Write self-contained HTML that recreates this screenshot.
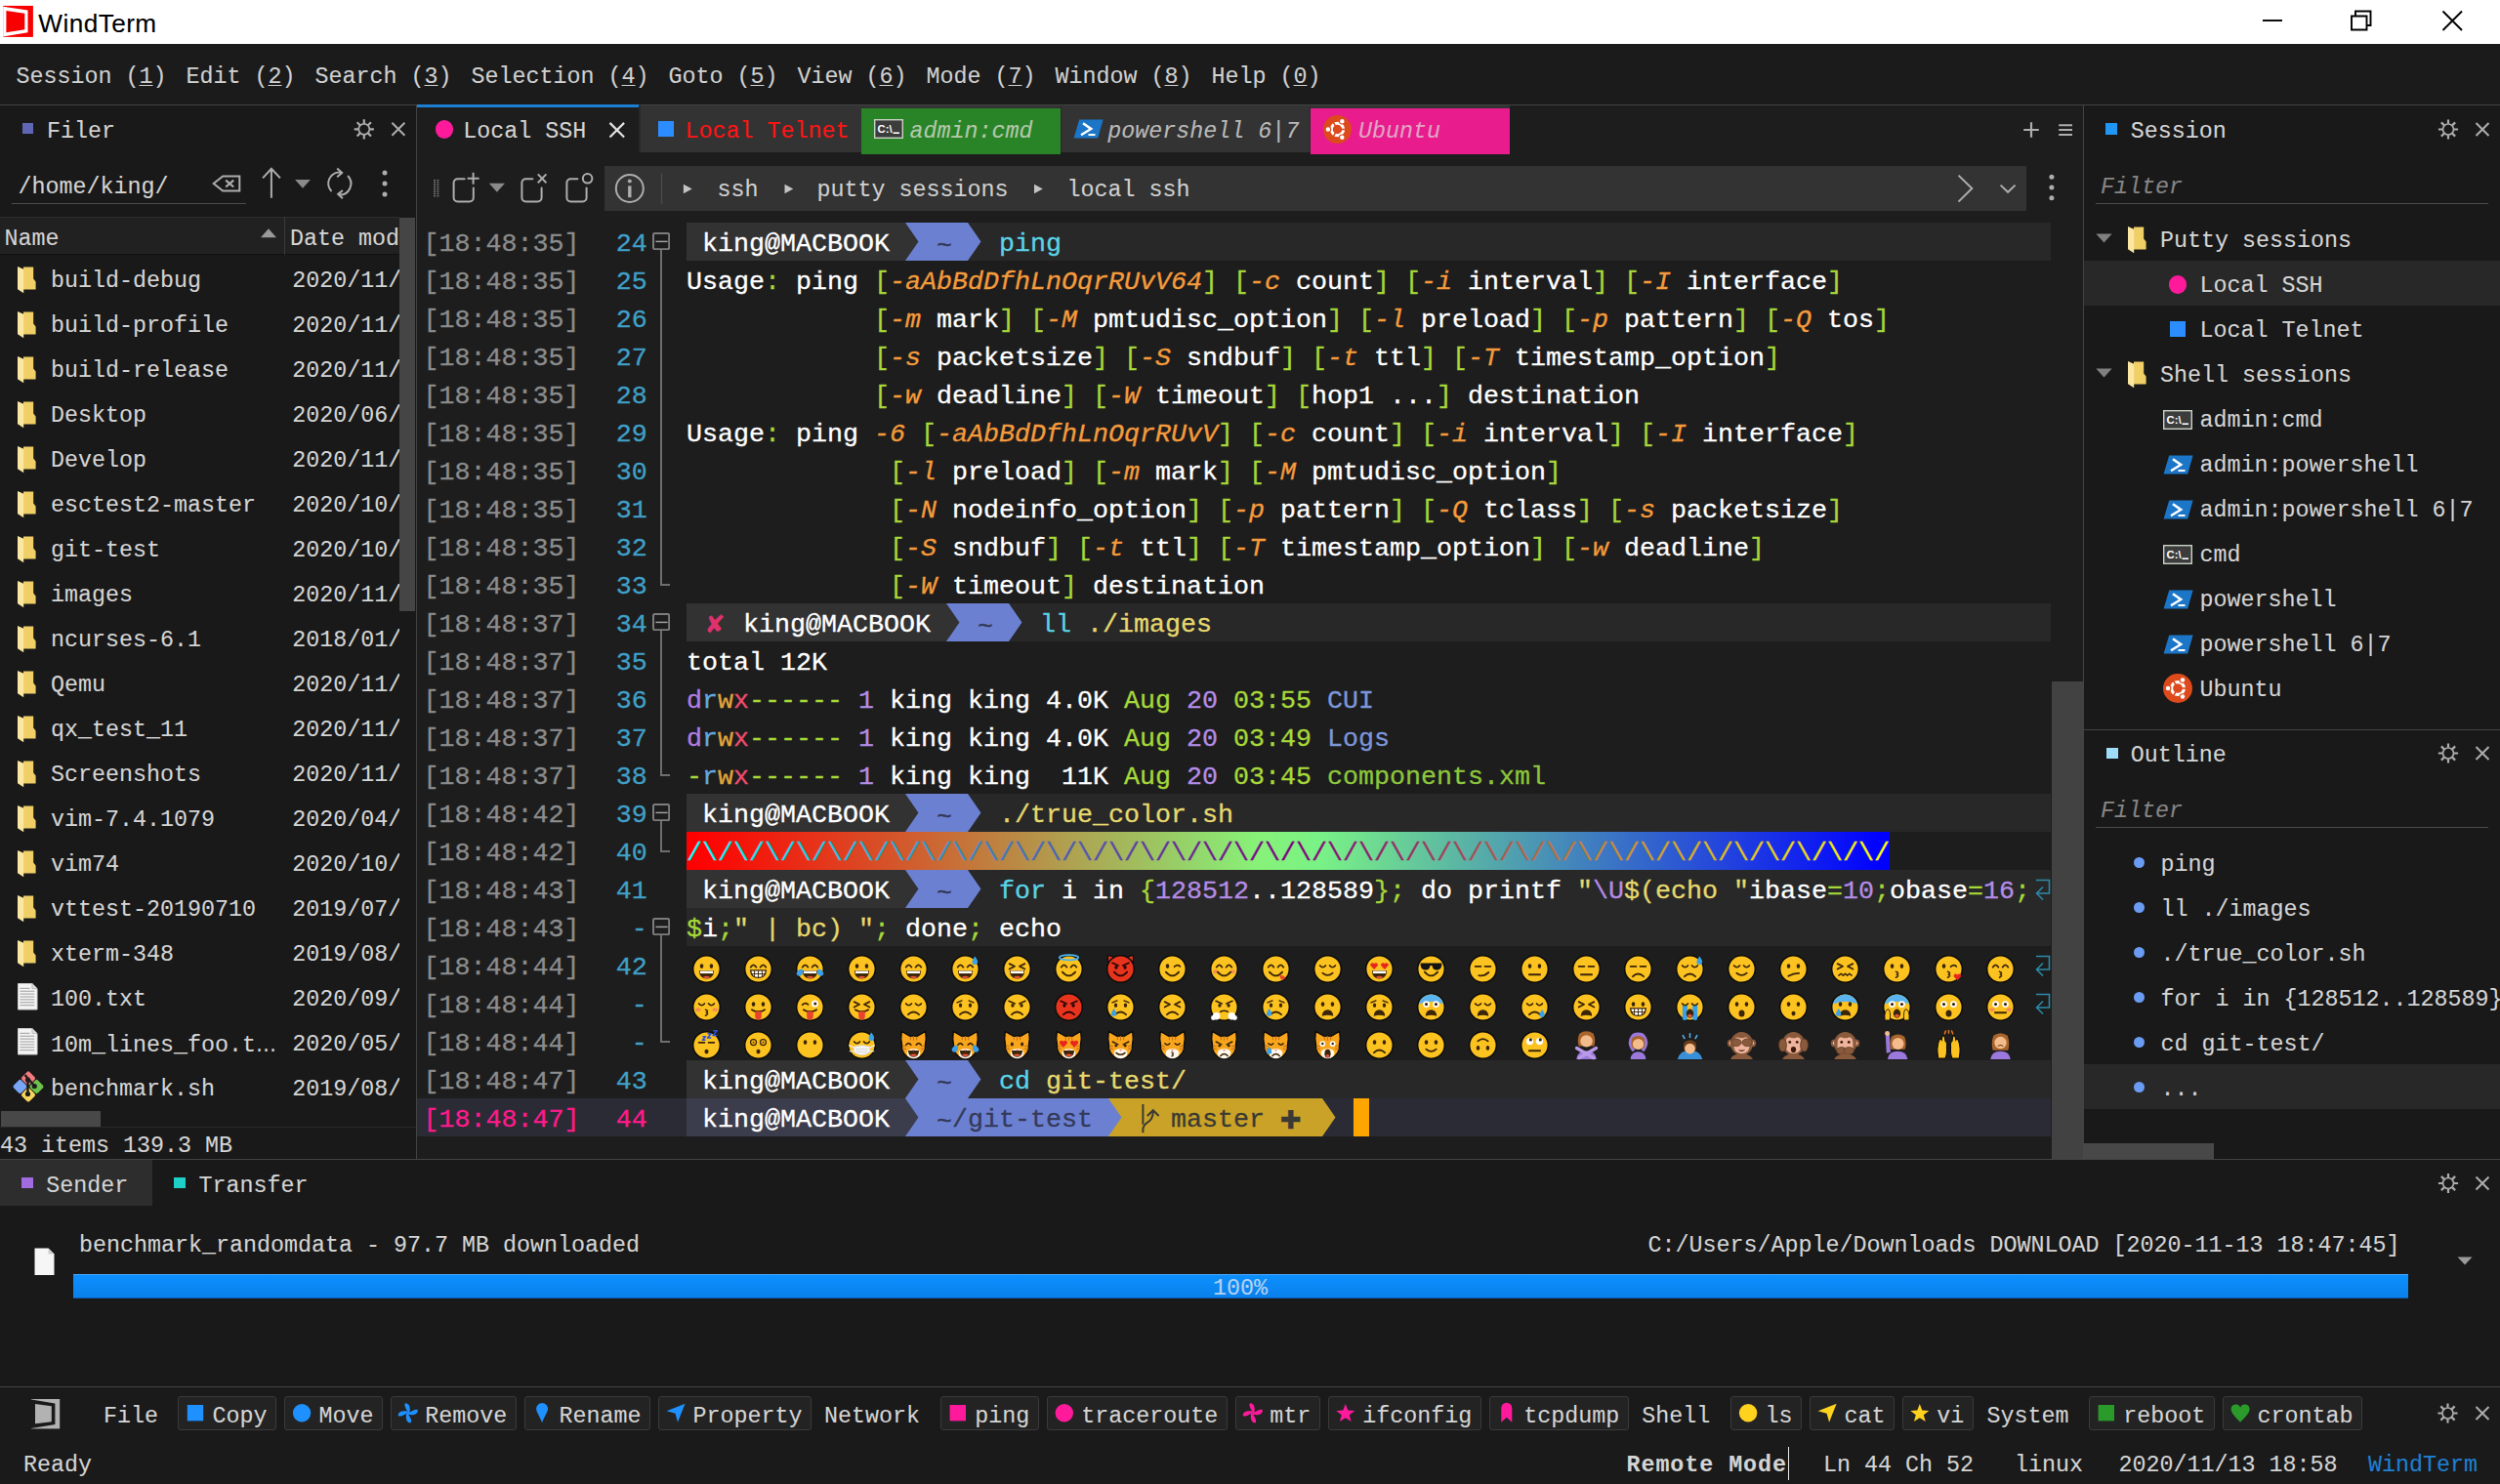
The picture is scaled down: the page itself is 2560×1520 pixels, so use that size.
<!DOCTYPE html>
<html><head><meta charset="utf-8"><title>WindTerm</title>
<style>
html,body{margin:0;padding:0;}
body{width:2560px;height:1520px;overflow:hidden;background:#1b1b1b;position:relative;font-family:"Liberation Mono","DejaVu Sans Mono",monospace;font-size:23.333px;color:#d4d4d4;-webkit-text-stroke:0.1px;}
div{box-sizing:border-box;}
.t{position:absolute;white-space:pre;top:0;height:39px;line-height:44px;font-size:26.667px;-webkit-text-stroke:0.3px;}
.sy{font-family:"DejaVu Sans","Liberation Sans",sans-serif;}
i{font-style:italic;}
u{text-decoration:underline;text-underline-offset:1.5px;text-decoration-thickness:1.2px;}.em{position:absolute;overflow:visible;}
</style></head><body>
<div style="position:absolute;left:0px;top:0px;width:2560px;height:45px;background:#ffffff;"></div><svg style="position:absolute;left:3px;top:5px;" width="32" height="34" viewBox="0 0 32 34"><rect x="0.2" y="0.9" width="30.7" height="32" fill="#f80000"/><path d="M0.2 1.7L25.5 5.6V28.3L0.2 32.4Z" fill="#fff"/><path d="M3.4 5.9L22.3 8.8V25.2L3.4 28.3Z" fill="#f80000"/></svg><div style="position:absolute;left:39.3px;top:5.6px;height:36px;line-height:36px;letter-spacing:.42px;font-family:'Liberation Sans',sans-serif;font-size:26.2px;color:#000;">WindTerm</div><svg style="position:absolute;left:2310px;top:0px;" width="240" height="45" viewBox="0 0 240 45"><g stroke="#000" stroke-width="1.9" fill="none"><path d="M7 21H27"/><path d="M98 16.5H113.5V30.5H98Z"/><path d="M102 16.5V11.5H117.5V26H113.5"/><path d="M191.5 11.5L211 31M211 11.5L191.5 31"/></g></svg><div style="position:absolute;left:0px;top:45px;width:2560px;height:62px;background:#1b1b1b;"></div><div style="position:absolute;left:0px;top:107px;width:2560px;height:1px;background:#434343;"></div><div style="position:absolute;left:16.5px;top:59.4px;height:40px;line-height:40px;font-size:23.333px;color:#d0d0d0;white-space:pre;">Session (<u>1</u>)</div><div style="position:absolute;left:190.5px;top:59.4px;height:40px;line-height:40px;font-size:23.333px;color:#d0d0d0;white-space:pre;">Edit (<u>2</u>)</div><div style="position:absolute;left:322.5px;top:59.4px;height:40px;line-height:40px;font-size:23.333px;color:#d0d0d0;white-space:pre;">Search (<u>3</u>)</div><div style="position:absolute;left:482.5px;top:59.4px;height:40px;line-height:40px;font-size:23.333px;color:#d0d0d0;white-space:pre;">Selection (<u>4</u>)</div><div style="position:absolute;left:684.5px;top:59.4px;height:40px;line-height:40px;font-size:23.333px;color:#d0d0d0;white-space:pre;">Goto (<u>5</u>)</div><div style="position:absolute;left:816.5px;top:59.4px;height:40px;line-height:40px;font-size:23.333px;color:#d0d0d0;white-space:pre;">View (<u>6</u>)</div><div style="position:absolute;left:948.5px;top:59.4px;height:40px;line-height:40px;font-size:23.333px;color:#d0d0d0;white-space:pre;">Mode (<u>7</u>)</div><div style="position:absolute;left:1080.5px;top:59.4px;height:40px;line-height:40px;font-size:23.333px;color:#d0d0d0;white-space:pre;">Window (<u>8</u>)</div><div style="position:absolute;left:1240.5px;top:59.4px;height:40px;line-height:40px;font-size:23.333px;color:#d0d0d0;white-space:pre;">Help (<u>0</u>)</div><div style="position:absolute;left:0px;top:108px;width:426px;height:1079px;background:#191919;"></div><div style="position:absolute;left:426px;top:108px;width:1px;height:1079px;background:#434343;"></div><div style="position:absolute;left:427px;top:108px;width:1706px;height:1079px;background:#1d1d1d;"></div><div style="position:absolute;left:2133px;top:108px;width:1px;height:1079px;background:#434343;"></div><div style="position:absolute;left:2134px;top:108px;width:426px;height:1079px;background:#191919;"></div><div style="position:absolute;left:0px;top:1187px;width:2560px;height:1px;background:#434343;"></div><div style="position:absolute;left:0px;top:1188px;width:2560px;height:232px;background:#191919;"></div><div style="position:absolute;left:0px;top:1420px;width:2560px;height:1px;background:#434343;"></div><div style="position:absolute;left:0px;top:1421px;width:2560px;height:99px;background:#1a1a1a;"></div><div style="position:absolute;left:22.5px;top:125.5px;width:11.5px;height:11.5px;background:#5f66b6;"></div><div style="position:absolute;left:48.0px;top:114.8px;height:40px;line-height:40px;font-size:23.333px;color:#d4d4d4;white-space:pre;">Filer</div><svg style="position:absolute;left:0;top:0;overflow:visible" width="1" height="1"><circle cx="372.8" cy="132.3" r="5.5" fill="none" stroke="#adadad" stroke-width="1.7"/><path d="M378.60 132.30L382.90 132.30M376.90 136.40L379.94 139.44M372.80 138.10L372.80 142.40M368.70 136.40L365.66 139.44M367.00 132.30L362.70 132.30M368.70 128.20L365.66 125.16M372.80 126.50L372.80 122.20M376.90 128.20L379.94 125.16" stroke="#adadad" stroke-width="2.2" fill="none"/></svg><svg style="position:absolute;left:0;top:0;overflow:visible" width="1" height="1"><path d="M401.4 125.80000000000001L414.4 138.8M414.4 125.80000000000001L401.4 138.8" stroke="#adadad" stroke-width="2" fill="none"/></svg><div style="position:absolute;left:18.5px;top:171.8px;height:40px;line-height:40px;font-size:23.333px;color:#d4d4d4;white-space:pre;">/home/king/</div><div style="position:absolute;left:12px;top:208px;width:240px;height:1px;background:#4a4a4a;"></div><svg style="position:absolute;left:0;top:0;overflow:visible" width="1" height="1"><g fill="none" stroke="#adadad" stroke-width="2"><path d="M218.7 188L228.2 180.4H245.3V195.6H228.2Z" stroke-linejoin="miter"/><path d="M231.2 184.6L239.2 191.5M239.2 184.6L231.2 191.5" stroke-width="2.2"/><path d="M277.9 202.8V173M269.1 182.4L277.9 172.8L286.9 182.4"/><path d="M339.5 196A11.5 11.5 0 0 1 349.6 176.6M345.2 172.6L350.2 176.9L345.2 181.3"/><path d="M356.1 180A11.5 11.5 0 0 1 346.9 199.5M350.9 194.9L346.2 198.9L350.9 203.2"/></g><path d="M302.1 183.9H317.9L310 192.8Z" fill="#8a8a8a"/></svg><svg style="position:absolute;left:0;top:0;overflow:visible" width="1" height="1"><circle cx="394" cy="177.1" r="2.5" fill="#adadad"/><circle cx="394" cy="188.05" r="2.5" fill="#adadad"/><circle cx="394" cy="198.9" r="2.5" fill="#adadad"/></svg><div style="position:absolute;left:0px;top:222px;width:409px;height:39px;background:#212121;border-top:1px solid #2e2e2e;border-bottom:1px solid #111;"></div><div style="position:absolute;left:291px;top:222px;width:1px;height:39px;background:#3a3a3a;"></div><div style="position:absolute;left:4.5px;top:224.8px;height:40px;line-height:40px;font-size:23.333px;color:#d4d4d4;white-space:pre;">Name</div><div style="position:absolute;left:297.0px;top:224.8px;height:40px;line-height:40px;font-size:23.333px;color:#d4d4d4;white-space:pre;width:112px;overflow:hidden;">Date mod</div><svg style="position:absolute;left:266px;top:233px;" width="18" height="12" viewBox="0 0 18 12"><path d="M1 10.2L9 1.2L17 10.2Z" fill="#9a9a9a"/></svg><div style="position:absolute;left:409px;top:223px;width:16px;height:403px;background:#454545;"></div><svg style="position:absolute;left:17.9px;top:272.6px" width="20" height="28" viewBox="0 0 20 28"><path d="M6 0.6H16.2V12.6L18.6 15.4V23.6H6Z" fill="#efcf66"/><path d="M0 0L6.2 2.8V27.2L0 23.2Z" fill="#fbe7a2"/></svg><div style="position:absolute;left:52.0px;top:267.8px;height:40px;line-height:40px;font-size:23.333px;color:#d4d4d4;white-space:pre;">build-debug</div><div style="position:absolute;left:299.3px;top:267.8px;height:40px;line-height:40px;font-size:23.333px;color:#d4d4d4;white-space:pre;width:110px;overflow:hidden;">2020/11/</div><svg style="position:absolute;left:17.9px;top:318.6px" width="20" height="28" viewBox="0 0 20 28"><path d="M6 0.6H16.2V12.6L18.6 15.4V23.6H6Z" fill="#efcf66"/><path d="M0 0L6.2 2.8V27.2L0 23.2Z" fill="#fbe7a2"/></svg><div style="position:absolute;left:52.0px;top:313.8px;height:40px;line-height:40px;font-size:23.333px;color:#d4d4d4;white-space:pre;">build-profile</div><div style="position:absolute;left:299.3px;top:313.8px;height:40px;line-height:40px;font-size:23.333px;color:#d4d4d4;white-space:pre;width:110px;overflow:hidden;">2020/11/</div><svg style="position:absolute;left:17.9px;top:364.6px" width="20" height="28" viewBox="0 0 20 28"><path d="M6 0.6H16.2V12.6L18.6 15.4V23.6H6Z" fill="#efcf66"/><path d="M0 0L6.2 2.8V27.2L0 23.2Z" fill="#fbe7a2"/></svg><div style="position:absolute;left:52.0px;top:359.8px;height:40px;line-height:40px;font-size:23.333px;color:#d4d4d4;white-space:pre;">build-release</div><div style="position:absolute;left:299.3px;top:359.8px;height:40px;line-height:40px;font-size:23.333px;color:#d4d4d4;white-space:pre;width:110px;overflow:hidden;">2020/11/</div><svg style="position:absolute;left:17.9px;top:410.6px" width="20" height="28" viewBox="0 0 20 28"><path d="M6 0.6H16.2V12.6L18.6 15.4V23.6H6Z" fill="#efcf66"/><path d="M0 0L6.2 2.8V27.2L0 23.2Z" fill="#fbe7a2"/></svg><div style="position:absolute;left:52.0px;top:405.8px;height:40px;line-height:40px;font-size:23.333px;color:#d4d4d4;white-space:pre;">Desktop</div><div style="position:absolute;left:299.3px;top:405.8px;height:40px;line-height:40px;font-size:23.333px;color:#d4d4d4;white-space:pre;width:110px;overflow:hidden;">2020/06/</div><svg style="position:absolute;left:17.9px;top:456.6px" width="20" height="28" viewBox="0 0 20 28"><path d="M6 0.6H16.2V12.6L18.6 15.4V23.6H6Z" fill="#efcf66"/><path d="M0 0L6.2 2.8V27.2L0 23.2Z" fill="#fbe7a2"/></svg><div style="position:absolute;left:52.0px;top:451.8px;height:40px;line-height:40px;font-size:23.333px;color:#d4d4d4;white-space:pre;">Develop</div><div style="position:absolute;left:299.3px;top:451.8px;height:40px;line-height:40px;font-size:23.333px;color:#d4d4d4;white-space:pre;width:110px;overflow:hidden;">2020/11/</div><svg style="position:absolute;left:17.9px;top:502.6px" width="20" height="28" viewBox="0 0 20 28"><path d="M6 0.6H16.2V12.6L18.6 15.4V23.6H6Z" fill="#efcf66"/><path d="M0 0L6.2 2.8V27.2L0 23.2Z" fill="#fbe7a2"/></svg><div style="position:absolute;left:52.0px;top:497.8px;height:40px;line-height:40px;font-size:23.333px;color:#d4d4d4;white-space:pre;">esctest2-master</div><div style="position:absolute;left:299.3px;top:497.8px;height:40px;line-height:40px;font-size:23.333px;color:#d4d4d4;white-space:pre;width:110px;overflow:hidden;">2020/10/</div><svg style="position:absolute;left:17.9px;top:548.6px" width="20" height="28" viewBox="0 0 20 28"><path d="M6 0.6H16.2V12.6L18.6 15.4V23.6H6Z" fill="#efcf66"/><path d="M0 0L6.2 2.8V27.2L0 23.2Z" fill="#fbe7a2"/></svg><div style="position:absolute;left:52.0px;top:543.8px;height:40px;line-height:40px;font-size:23.333px;color:#d4d4d4;white-space:pre;">git-test</div><div style="position:absolute;left:299.3px;top:543.8px;height:40px;line-height:40px;font-size:23.333px;color:#d4d4d4;white-space:pre;width:110px;overflow:hidden;">2020/10/</div><svg style="position:absolute;left:17.9px;top:594.6px" width="20" height="28" viewBox="0 0 20 28"><path d="M6 0.6H16.2V12.6L18.6 15.4V23.6H6Z" fill="#efcf66"/><path d="M0 0L6.2 2.8V27.2L0 23.2Z" fill="#fbe7a2"/></svg><div style="position:absolute;left:52.0px;top:589.8px;height:40px;line-height:40px;font-size:23.333px;color:#d4d4d4;white-space:pre;">images</div><div style="position:absolute;left:299.3px;top:589.8px;height:40px;line-height:40px;font-size:23.333px;color:#d4d4d4;white-space:pre;width:110px;overflow:hidden;">2020/11/</div><svg style="position:absolute;left:17.9px;top:640.6px" width="20" height="28" viewBox="0 0 20 28"><path d="M6 0.6H16.2V12.6L18.6 15.4V23.6H6Z" fill="#efcf66"/><path d="M0 0L6.2 2.8V27.2L0 23.2Z" fill="#fbe7a2"/></svg><div style="position:absolute;left:52.0px;top:635.8px;height:40px;line-height:40px;font-size:23.333px;color:#d4d4d4;white-space:pre;">ncurses-6.1</div><div style="position:absolute;left:299.3px;top:635.8px;height:40px;line-height:40px;font-size:23.333px;color:#d4d4d4;white-space:pre;width:110px;overflow:hidden;">2018/01/</div><svg style="position:absolute;left:17.9px;top:686.6px" width="20" height="28" viewBox="0 0 20 28"><path d="M6 0.6H16.2V12.6L18.6 15.4V23.6H6Z" fill="#efcf66"/><path d="M0 0L6.2 2.8V27.2L0 23.2Z" fill="#fbe7a2"/></svg><div style="position:absolute;left:52.0px;top:681.8px;height:40px;line-height:40px;font-size:23.333px;color:#d4d4d4;white-space:pre;">Qemu</div><div style="position:absolute;left:299.3px;top:681.8px;height:40px;line-height:40px;font-size:23.333px;color:#d4d4d4;white-space:pre;width:110px;overflow:hidden;">2020/11/</div><svg style="position:absolute;left:17.9px;top:732.6px" width="20" height="28" viewBox="0 0 20 28"><path d="M6 0.6H16.2V12.6L18.6 15.4V23.6H6Z" fill="#efcf66"/><path d="M0 0L6.2 2.8V27.2L0 23.2Z" fill="#fbe7a2"/></svg><div style="position:absolute;left:52.0px;top:727.8px;height:40px;line-height:40px;font-size:23.333px;color:#d4d4d4;white-space:pre;">qx_test_11</div><div style="position:absolute;left:299.3px;top:727.8px;height:40px;line-height:40px;font-size:23.333px;color:#d4d4d4;white-space:pre;width:110px;overflow:hidden;">2020/11/</div><svg style="position:absolute;left:17.9px;top:778.6px" width="20" height="28" viewBox="0 0 20 28"><path d="M6 0.6H16.2V12.6L18.6 15.4V23.6H6Z" fill="#efcf66"/><path d="M0 0L6.2 2.8V27.2L0 23.2Z" fill="#fbe7a2"/></svg><div style="position:absolute;left:52.0px;top:773.8px;height:40px;line-height:40px;font-size:23.333px;color:#d4d4d4;white-space:pre;">Screenshots</div><div style="position:absolute;left:299.3px;top:773.8px;height:40px;line-height:40px;font-size:23.333px;color:#d4d4d4;white-space:pre;width:110px;overflow:hidden;">2020/11/</div><svg style="position:absolute;left:17.9px;top:824.6px" width="20" height="28" viewBox="0 0 20 28"><path d="M6 0.6H16.2V12.6L18.6 15.4V23.6H6Z" fill="#efcf66"/><path d="M0 0L6.2 2.8V27.2L0 23.2Z" fill="#fbe7a2"/></svg><div style="position:absolute;left:52.0px;top:819.8px;height:40px;line-height:40px;font-size:23.333px;color:#d4d4d4;white-space:pre;">vim-7.4.1079</div><div style="position:absolute;left:299.3px;top:819.8px;height:40px;line-height:40px;font-size:23.333px;color:#d4d4d4;white-space:pre;width:110px;overflow:hidden;">2020/04/</div><svg style="position:absolute;left:17.9px;top:870.6px" width="20" height="28" viewBox="0 0 20 28"><path d="M6 0.6H16.2V12.6L18.6 15.4V23.6H6Z" fill="#efcf66"/><path d="M0 0L6.2 2.8V27.2L0 23.2Z" fill="#fbe7a2"/></svg><div style="position:absolute;left:52.0px;top:865.8px;height:40px;line-height:40px;font-size:23.333px;color:#d4d4d4;white-space:pre;">vim74</div><div style="position:absolute;left:299.3px;top:865.8px;height:40px;line-height:40px;font-size:23.333px;color:#d4d4d4;white-space:pre;width:110px;overflow:hidden;">2020/10/</div><svg style="position:absolute;left:17.9px;top:916.6px" width="20" height="28" viewBox="0 0 20 28"><path d="M6 0.6H16.2V12.6L18.6 15.4V23.6H6Z" fill="#efcf66"/><path d="M0 0L6.2 2.8V27.2L0 23.2Z" fill="#fbe7a2"/></svg><div style="position:absolute;left:52.0px;top:911.8px;height:40px;line-height:40px;font-size:23.333px;color:#d4d4d4;white-space:pre;">vttest-20190710</div><div style="position:absolute;left:299.3px;top:911.8px;height:40px;line-height:40px;font-size:23.333px;color:#d4d4d4;white-space:pre;width:110px;overflow:hidden;">2019/07/</div><svg style="position:absolute;left:17.9px;top:962.6px" width="20" height="28" viewBox="0 0 20 28"><path d="M6 0.6H16.2V12.6L18.6 15.4V23.6H6Z" fill="#efcf66"/><path d="M0 0L6.2 2.8V27.2L0 23.2Z" fill="#fbe7a2"/></svg><div style="position:absolute;left:52.0px;top:957.8px;height:40px;line-height:40px;font-size:23.333px;color:#d4d4d4;white-space:pre;">xterm-348</div><div style="position:absolute;left:299.3px;top:957.8px;height:40px;line-height:40px;font-size:23.333px;color:#d4d4d4;white-space:pre;width:110px;overflow:hidden;">2019/08/</div><svg style="position:absolute;left:18px;top:1007.0px" width="21.2" height="28" viewBox="0 0 22 29"><path d="M0.5 0.5H15.5L20.8 5.8V28H0.5Z" fill="#f4f4f4" stroke="#cfcfcf" stroke-width="1"/><path d="M15.5 0.5V5.8H20.8" fill="#ddd" stroke="#bbb" stroke-width="1"/><path d="M2.5 5.5H13" stroke="#9a9a9a" stroke-width="1"/><path d="M2.5 8.5H18" stroke="#9a9a9a" stroke-width="1"/><path d="M2.5 11.5H18" stroke="#9a9a9a" stroke-width="1"/><path d="M2.5 14.5H18" stroke="#9a9a9a" stroke-width="1"/><path d="M2.5 17.5H18" stroke="#9a9a9a" stroke-width="1"/><path d="M2.5 20.5H18" stroke="#9a9a9a" stroke-width="1"/><path d="M2.5 23.5H18" stroke="#9a9a9a" stroke-width="1"/></svg><div style="position:absolute;left:52.0px;top:1003.8px;height:40px;line-height:40px;font-size:23.333px;color:#d4d4d4;white-space:pre;">100.txt</div><div style="position:absolute;left:299.3px;top:1003.8px;height:40px;line-height:40px;font-size:23.333px;color:#d4d4d4;white-space:pre;width:110px;overflow:hidden;">2020/09/</div><svg style="position:absolute;left:18px;top:1053.0px" width="21.2" height="28" viewBox="0 0 22 29"><path d="M0.5 0.5H15.5L20.8 5.8V28H0.5Z" fill="#f4f4f4" stroke="#cfcfcf" stroke-width="1"/><path d="M15.5 0.5V5.8H20.8" fill="#ddd" stroke="#bbb" stroke-width="1"/><path d="M2.5 5.5H13" stroke="#9a9a9a" stroke-width="1"/><path d="M2.5 8.5H18" stroke="#9a9a9a" stroke-width="1"/><path d="M2.5 11.5H18" stroke="#9a9a9a" stroke-width="1"/><path d="M2.5 14.5H18" stroke="#9a9a9a" stroke-width="1"/><path d="M2.5 17.5H18" stroke="#9a9a9a" stroke-width="1"/><path d="M2.5 20.5H18" stroke="#9a9a9a" stroke-width="1"/><path d="M2.5 23.5H18" stroke="#9a9a9a" stroke-width="1"/></svg><div style="position:absolute;left:52.0px;top:1049.8px;height:40px;line-height:40px;font-size:23.333px;color:#d4d4d4;white-space:pre;">10m_lines_foo.t<span class="sy" style="font-size:21px">…</span></div><div style="position:absolute;left:299.3px;top:1049.8px;height:40px;line-height:40px;font-size:23.333px;color:#d4d4d4;white-space:pre;width:110px;overflow:hidden;">2020/05/</div><svg style="position:absolute;left:11.899999999999999px;top:1096.1px" width="34" height="34" viewBox="-17 -17 34 34"><g transform="rotate(45)"><rect x="-11.6" y="-11.6" width="11.2" height="11.2" rx="2.2" fill="#f47a7e"/><rect x="0.4" y="-11.6" width="11.2" height="11.2" rx="2.2" fill="#6cc24a"/><rect x="-11.6" y="0.4" width="11.2" height="11.2" rx="2.2" fill="#79a6f6"/><rect x="0.4" y="0.4" width="11.2" height="11.2" rx="2.2" fill="#f8d458"/></g><g stroke="#1c1c1c" stroke-width="2.4" fill="none"><path d="M-0.5 -9V8.5"/><path d="M-3.5 -12L6 -1"/></g><circle cx="-0.5" cy="-7" r="2.6" fill="#1c1c1c"/><circle cx="6.3" cy="-0.5" r="2.6" fill="#1c1c1c"/><circle cx="-0.5" cy="7.5" r="2.6" fill="#1c1c1c"/></svg><div style="position:absolute;left:52.0px;top:1095.8px;height:40px;line-height:40px;font-size:23.333px;color:#d4d4d4;white-space:pre;">benchmark.sh</div><div style="position:absolute;left:299.3px;top:1095.8px;height:40px;line-height:40px;font-size:23.333px;color:#d4d4d4;white-space:pre;width:110px;overflow:hidden;">2019/08/</div><div style="position:absolute;left:0px;top:1154px;width:426px;height:1px;background:#272727;"></div><div style="position:absolute;left:1px;top:1138px;width:102px;height:16px;background:#484848;"></div><div style="position:absolute;left:0.0px;top:1153.8px;height:40px;line-height:40px;font-size:23.333px;color:#d4d4d4;white-space:pre;">43 items 139.3 MB</div><div style="position:absolute;left:427px;top:107px;width:227px;height:3px;background:#1b7fd4;"></div><div style="position:absolute;left:654px;top:108px;width:892px;height:48px;background:#333333;"></div><div style="position:absolute;left:654px;top:108px;width:2px;height:48px;background:#282828;"></div><div style="position:absolute;left:882px;top:111px;width:204px;height:47px;background:#298427;"></div><div style="position:absolute;left:1342px;top:111px;width:204px;height:47px;background:#e81c8c;"></div><div style="position:absolute;left:1086px;top:108px;width:1px;height:48px;background:#2a2a2a;"></div><div style="position:absolute;left:1341px;top:108px;width:1px;height:48px;background:#2a2a2a;"></div><div style="position:absolute;left:446.0px;top:123.2px;width:18.4px;height:18.4px;border-radius:50%;background:#ff1a9c"></div><div style="position:absolute;left:474.3px;top:115.1px;height:40px;line-height:40px;font-size:23.333px;color:#d4d4d4;white-space:pre;">Local SSH</div><svg style="position:absolute;left:0;top:0;overflow:visible" width="1" height="1"><path d="M624.5 125.89999999999999L639.0999999999999 140.5M639.0999999999999 125.89999999999999L624.5 140.5" stroke="#e0e0e0" stroke-width="2.2" fill="none"/></svg><div style="position:absolute;left:674.4px;top:124px;width:15.6px;height:15.6px;background:#2b8dff;"></div><div style="position:absolute;left:701.5px;top:115.1px;height:40px;line-height:40px;font-size:23.333px;color:#ff1414;white-space:pre;">Local Telnet</div><svg style="position:absolute;left:895px;top:122.2px" width="30" height="20" viewBox="0 0 30 20"><rect x="0.7" y="0.7" width="28.6" height="18.6" fill="#3c3c3c" stroke="#c9d2c4" stroke-width="1.4"/><text x="3.6" y="13.6" font-family="'Liberation Sans',sans-serif" font-weight="bold" font-size="10.5" fill="#fff" textLength="15" lengthAdjust="spacingAndGlyphs">C:\</text><path d="M19.5 14.2H26" stroke="#fff" stroke-width="1.6"/></svg><div style="position:absolute;left:931.5px;top:115.1px;height:40px;line-height:40px;font-size:23.333px;color:#b4c8ac;white-space:pre;font-style:italic;">admin:cmd</div><svg style="position:absolute;left:1098.6px;top:122.2px" width="31" height="20" viewBox="0 0 31 20"><path d="M6.2 0.4H30.6L25.2 19.6H0.6Z" fill="#1c76c8"/><path d="M10 4.2L18.2 10L8 16.2" fill="none" stroke="#fff" stroke-width="2.5" stroke-linejoin="miter"/><path d="M15.5 16H22.5" stroke="#fff" stroke-width="2"/></svg><div style="position:absolute;left:1134.3px;top:115.1px;height:40px;line-height:40px;font-size:23.333px;color:#b9b9b9;white-space:pre;font-style:italic;">powershell 6|7</div><svg style="position:absolute;left:1355.0px;top:118.0px" width="29.0" height="29.0" viewBox="-14.5 -14.5 29 29"><circle cx="0" cy="0" r="14.5" fill="#dd4a1c"/><circle cx="0" cy="0" r="6.2" fill="none" stroke="#fff" stroke-width="3"/><circle cx="-9.60" cy="0.00" r="3.3" fill="#dd4a1c"/><circle cx="-9.60" cy="0.00" r="2.2" fill="#fff"/><circle cx="4.80" cy="8.31" r="3.3" fill="#dd4a1c"/><circle cx="4.80" cy="8.31" r="2.2" fill="#fff"/><circle cx="4.80" cy="-8.31" r="3.3" fill="#dd4a1c"/><circle cx="4.80" cy="-8.31" r="2.2" fill="#fff"/><path d="M4.00 0.00L9.00 0.00" stroke="#dd4a1c" stroke-width="1.6"/><path d="M-2.00 3.46L-4.50 7.79" stroke="#dd4a1c" stroke-width="1.6"/><path d="M-2.00 -3.46L-4.50 -7.79" stroke="#dd4a1c" stroke-width="1.6"/></svg><div style="position:absolute;left:1391.0px;top:115.1px;height:40px;line-height:40px;font-size:23.333px;color:#e0a4c6;white-space:pre;font-style:italic;">Ubuntu</div><svg style="position:absolute;left:2070px;top:122px;" width="60" height="22" viewBox="0 0 60 22"><g stroke="#adadad" fill="none"><path d="M2.2 11H17.8M10 3.2V18.8" stroke-width="2.2"/><path d="M38.2 6.2H52M38.2 11H52M38.2 15.9H52" stroke-width="2"/></g></svg><div style="position:absolute;left:619px;top:170px;width:1456px;height:46px;background:#333333;"></div><svg style="position:absolute;left:444px;top:184px;" width="6" height="19" viewBox="0 0 6 19"><rect x="0" y="0.0" width="2" height="1.3" fill="#7a7a7a"/><rect x="0" y="2.3" width="2" height="1.3" fill="#7a7a7a"/><rect x="0" y="4.6" width="2" height="1.3" fill="#7a7a7a"/><rect x="0" y="6.8999999999999995" width="2" height="1.3" fill="#7a7a7a"/><rect x="0" y="9.2" width="2" height="1.3" fill="#7a7a7a"/><rect x="0" y="11.5" width="2" height="1.3" fill="#7a7a7a"/><rect x="0" y="13.799999999999999" width="2" height="1.3" fill="#7a7a7a"/><rect x="0" y="16.099999999999998" width="2" height="1.3" fill="#7a7a7a"/><rect x="3.4" y="0.0" width="2" height="1.3" fill="#7a7a7a"/><rect x="3.4" y="2.3" width="2" height="1.3" fill="#7a7a7a"/><rect x="3.4" y="4.6" width="2" height="1.3" fill="#7a7a7a"/><rect x="3.4" y="6.8999999999999995" width="2" height="1.3" fill="#7a7a7a"/><rect x="3.4" y="9.2" width="2" height="1.3" fill="#7a7a7a"/><rect x="3.4" y="11.5" width="2" height="1.3" fill="#7a7a7a"/><rect x="3.4" y="13.799999999999999" width="2" height="1.3" fill="#7a7a7a"/><rect x="3.4" y="16.099999999999998" width="2" height="1.3" fill="#7a7a7a"/></svg><svg style="position:absolute;left:0;top:0;overflow:visible" width="1" height="1"><path d="M475.6 183.2H468.6a4 4 0 0 0 -4 4V202.4a4 4 0 0 0 4 4H480.8a4 4 0 0 0 4 -4V192.4" fill="none" stroke="#adadad" stroke-width="2" stroke-linecap="round"/><path d="M478.6 182.8H490.6M484.6 176.8V188.8" stroke="#adadad" stroke-width="2" fill="none"/><path d="M500.8 187.8H517L508.9 196.8Z" fill="#8a8a8a"/><path d="M545.4 183.2H538.4a4 4 0 0 0 -4 4V202.4a4 4 0 0 0 4 4H550.6a4 4 0 0 0 4 -4V192.4" fill="none" stroke="#adadad" stroke-width="2" stroke-linecap="round"/><path d="M550.8 178.4L559.4 187.2M559.4 178.4L550.8 187.2" stroke="#adadad" stroke-width="2" fill="none"/><path d="M591.4 183.2H584.4a4 4 0 0 0 -4 4V202.4a4 4 0 0 0 4 4H596.6a4 4 0 0 0 4 -4V192.4" fill="none" stroke="#adadad" stroke-width="2" stroke-linecap="round"/><circle cx="601.6" cy="182.8" r="4.8" stroke="#adadad" stroke-width="2" fill="none"/><circle cx="644.8" cy="193" r="14" stroke="#adadad" stroke-width="2" fill="none"/><circle cx="644.8" cy="185.4" r="2" fill="#adadad"/><path d="M644.8 190.4V202.2" stroke="#adadad" stroke-width="3.4"/><path d="M677.5 178V208.6" stroke="#4c4c4c" stroke-width="1.4"/><path d="M699.9000000000001 188.8L708.7 193.5L699.9000000000001 198.2Z" fill="#c4c4c4"/><path d="M803.5 188.8L812.3 193.5L803.5 198.2Z" fill="#c4c4c4"/><path d="M1059.0 188.8L1067.8 193.5L1059.0 198.2Z" fill="#c4c4c4"/><path d="M2005.5 179.6L2019.3 193L2005.5 206.6" stroke="#adadad" stroke-width="2" fill="none"/><path d="M2048.6 189.6L2056.1 196.8L2063.6 189.6" stroke="#adadad" stroke-width="2" fill="none"/></svg><svg style="position:absolute;left:0;top:0;overflow:visible" width="1" height="1"><circle cx="2100.9" cy="181.3" r="2.5" fill="#adadad"/><circle cx="2100.9" cy="192" r="2.5" fill="#adadad"/><circle cx="2100.9" cy="202.7" r="2.5" fill="#adadad"/></svg><div style="position:absolute;left:734.5px;top:175.4px;height:40px;line-height:40px;font-size:23.333px;color:#cfcfcf;white-space:pre;">ssh</div><div style="position:absolute;left:836.5px;top:175.4px;height:40px;line-height:40px;font-size:23.333px;color:#cfcfcf;white-space:pre;">putty sessions</div><div style="position:absolute;left:1092.5px;top:175.4px;height:40px;line-height:40px;font-size:23.333px;color:#cfcfcf;white-space:pre;">local ssh</div><div style="position:absolute;left:2101px;top:698px;width:32px;height:489px;background:#424242;"></div><div style="position:absolute;left:703px;top:228px;width:1397px;height:39px;background:#282828"></div><div style="position:absolute;left:703px;top:618px;width:1397px;height:39px;background:#282828"></div><div style="position:absolute;left:703px;top:813px;width:1397px;height:39px;background:#282828"></div><div style="position:absolute;left:703px;top:891px;width:1397px;height:39px;background:#282828"></div><div style="position:absolute;left:703px;top:930px;width:1397px;height:39px;background:#282828"></div><div style="position:absolute;left:703px;top:1086px;width:1397px;height:39px;background:#282828"></div><div style="position:absolute;left:427px;top:1125px;width:1673px;height:39px;background:#2b2b35"></div><div style="position:absolute;left:703px;top:228px;width:224px;height:39px;background:#323232"></div><div style="position:absolute;left:927px;top:228px;width:64px;height:39px;background:#6c80d2"></div><div style="position:absolute;left:0;top:228px;width:2100px;height:39px"><span class="t" style="left:433.5px;color:#8c8c8c">[18:48:35]</span><span class="t" style="left:630.8px;color:#40a0c8">24</span><span class="t" style="left:719px;color:#fff">king@MACBOOK</span><svg style="position:absolute;left:927px;top:0" width="16" height="39" viewBox="0 0 16 39"><path d="M0 0L13.5 19.5L0 39Z" fill="#323232"/></svg><span class="t" style="left:959px;color:#343a58;top:1.7px">~</span><svg style="position:absolute;left:991px;top:0" width="16" height="39" viewBox="0 0 16 39"><path d="M0 0L13.5 19.5L0 39Z" fill="#6c80d2"/></svg><span class="t" style="left:1023px;color:#5ad4e6">ping</span></div><div style="position:absolute;left:0;top:267px;width:2100px;height:39px"><span class="t" style="left:433.5px;color:#8c8c8c">[18:48:35]</span><span class="t" style="left:630.8px;color:#40a0c8">25</span><span class="t" style="left:703px;color:#ffffff;">Usage</span><span class="t" style="left:783px;color:#a6d83a;">:</span><span class="t" style="left:815px;color:#ffffff;">ping</span><span class="t" style="left:895px;color:#a6d83a;">[</span><span class="t" style="left:911px;color:#f59b3c;font-style:italic;">-aAbBdDfhLnOqrRUvV64</span><span class="t" style="left:1231px;color:#a6d83a;">]</span><span class="t" style="left:1263px;color:#a6d83a;">[</span><span class="t" style="left:1279px;color:#f59b3c;font-style:italic;">-c</span><span class="t" style="left:1327px;color:#ffffff;">count</span><span class="t" style="left:1407px;color:#a6d83a;">]</span><span class="t" style="left:1439px;color:#a6d83a;">[</span><span class="t" style="left:1455px;color:#f59b3c;font-style:italic;">-i</span><span class="t" style="left:1503px;color:#ffffff;">interval</span><span class="t" style="left:1631px;color:#a6d83a;">]</span><span class="t" style="left:1663px;color:#a6d83a;">[</span><span class="t" style="left:1679px;color:#f59b3c;font-style:italic;">-I</span><span class="t" style="left:1727px;color:#ffffff;">interface</span><span class="t" style="left:1871px;color:#a6d83a;">]</span></div><div style="position:absolute;left:0;top:306px;width:2100px;height:39px"><span class="t" style="left:433.5px;color:#8c8c8c">[18:48:35]</span><span class="t" style="left:630.8px;color:#40a0c8">26</span><span class="t" style="left:895px;color:#a6d83a;">[</span><span class="t" style="left:911px;color:#f59b3c;font-style:italic;">-m</span><span class="t" style="left:959px;color:#ffffff;">mark</span><span class="t" style="left:1023px;color:#a6d83a;">]</span><span class="t" style="left:1055px;color:#a6d83a;">[</span><span class="t" style="left:1071px;color:#f59b3c;font-style:italic;">-M</span><span class="t" style="left:1119px;color:#ffffff;">pmtudisc_option</span><span class="t" style="left:1359px;color:#a6d83a;">]</span><span class="t" style="left:1391px;color:#a6d83a;">[</span><span class="t" style="left:1407px;color:#f59b3c;font-style:italic;">-l</span><span class="t" style="left:1455px;color:#ffffff;">preload</span><span class="t" style="left:1567px;color:#a6d83a;">]</span><span class="t" style="left:1599px;color:#a6d83a;">[</span><span class="t" style="left:1615px;color:#f59b3c;font-style:italic;">-p</span><span class="t" style="left:1663px;color:#ffffff;">pattern</span><span class="t" style="left:1775px;color:#a6d83a;">]</span><span class="t" style="left:1807px;color:#a6d83a;">[</span><span class="t" style="left:1823px;color:#f59b3c;font-style:italic;">-Q</span><span class="t" style="left:1871px;color:#ffffff;">tos</span><span class="t" style="left:1919px;color:#a6d83a;">]</span></div><div style="position:absolute;left:0;top:345px;width:2100px;height:39px"><span class="t" style="left:433.5px;color:#8c8c8c">[18:48:35]</span><span class="t" style="left:630.8px;color:#40a0c8">27</span><span class="t" style="left:895px;color:#a6d83a;">[</span><span class="t" style="left:911px;color:#f59b3c;font-style:italic;">-s</span><span class="t" style="left:959px;color:#ffffff;">packetsize</span><span class="t" style="left:1119px;color:#a6d83a;">]</span><span class="t" style="left:1151px;color:#a6d83a;">[</span><span class="t" style="left:1167px;color:#f59b3c;font-style:italic;">-S</span><span class="t" style="left:1215px;color:#ffffff;">sndbuf</span><span class="t" style="left:1311px;color:#a6d83a;">]</span><span class="t" style="left:1343px;color:#a6d83a;">[</span><span class="t" style="left:1359px;color:#f59b3c;font-style:italic;">-t</span><span class="t" style="left:1407px;color:#ffffff;">ttl</span><span class="t" style="left:1455px;color:#a6d83a;">]</span><span class="t" style="left:1487px;color:#a6d83a;">[</span><span class="t" style="left:1503px;color:#f59b3c;font-style:italic;">-T</span><span class="t" style="left:1551px;color:#ffffff;">timestamp_option</span><span class="t" style="left:1807px;color:#a6d83a;">]</span></div><div style="position:absolute;left:0;top:384px;width:2100px;height:39px"><span class="t" style="left:433.5px;color:#8c8c8c">[18:48:35]</span><span class="t" style="left:630.8px;color:#40a0c8">28</span><span class="t" style="left:895px;color:#a6d83a;">[</span><span class="t" style="left:911px;color:#f59b3c;font-style:italic;">-w</span><span class="t" style="left:959px;color:#ffffff;">deadline</span><span class="t" style="left:1087px;color:#a6d83a;">]</span><span class="t" style="left:1119px;color:#a6d83a;">[</span><span class="t" style="left:1135px;color:#f59b3c;font-style:italic;">-W</span><span class="t" style="left:1183px;color:#ffffff;">timeout</span><span class="t" style="left:1295px;color:#a6d83a;">]</span><span class="t" style="left:1327px;color:#a6d83a;">[</span><span class="t" style="left:1343px;color:#ffffff;">hop1</span><span class="t" style="left:1423px;color:#ffffff;">...</span><span class="t" style="left:1471px;color:#a6d83a;">]</span><span class="t" style="left:1503px;color:#ffffff;">destination</span></div><div style="position:absolute;left:0;top:423px;width:2100px;height:39px"><span class="t" style="left:433.5px;color:#8c8c8c">[18:48:35]</span><span class="t" style="left:630.8px;color:#40a0c8">29</span><span class="t" style="left:703px;color:#ffffff;">Usage</span><span class="t" style="left:783px;color:#a6d83a;">:</span><span class="t" style="left:815px;color:#ffffff;">ping</span><span class="t" style="left:895px;color:#f59b3c;font-style:italic;">-6</span><span class="t" style="left:943px;color:#a6d83a;">[</span><span class="t" style="left:959px;color:#f59b3c;font-style:italic;">-aAbBdDfhLnOqrRUvV</span><span class="t" style="left:1247px;color:#a6d83a;">]</span><span class="t" style="left:1279px;color:#a6d83a;">[</span><span class="t" style="left:1295px;color:#f59b3c;font-style:italic;">-c</span><span class="t" style="left:1343px;color:#ffffff;">count</span><span class="t" style="left:1423px;color:#a6d83a;">]</span><span class="t" style="left:1455px;color:#a6d83a;">[</span><span class="t" style="left:1471px;color:#f59b3c;font-style:italic;">-i</span><span class="t" style="left:1519px;color:#ffffff;">interval</span><span class="t" style="left:1647px;color:#a6d83a;">]</span><span class="t" style="left:1679px;color:#a6d83a;">[</span><span class="t" style="left:1695px;color:#f59b3c;font-style:italic;">-I</span><span class="t" style="left:1743px;color:#ffffff;">interface</span><span class="t" style="left:1887px;color:#a6d83a;">]</span></div><div style="position:absolute;left:0;top:462px;width:2100px;height:39px"><span class="t" style="left:433.5px;color:#8c8c8c">[18:48:35]</span><span class="t" style="left:630.8px;color:#40a0c8">30</span><span class="t" style="left:911px;color:#a6d83a;">[</span><span class="t" style="left:927px;color:#f59b3c;font-style:italic;">-l</span><span class="t" style="left:975px;color:#ffffff;">preload</span><span class="t" style="left:1087px;color:#a6d83a;">]</span><span class="t" style="left:1119px;color:#a6d83a;">[</span><span class="t" style="left:1135px;color:#f59b3c;font-style:italic;">-m</span><span class="t" style="left:1183px;color:#ffffff;">mark</span><span class="t" style="left:1247px;color:#a6d83a;">]</span><span class="t" style="left:1279px;color:#a6d83a;">[</span><span class="t" style="left:1295px;color:#f59b3c;font-style:italic;">-M</span><span class="t" style="left:1343px;color:#ffffff;">pmtudisc_option</span><span class="t" style="left:1583px;color:#a6d83a;">]</span></div><div style="position:absolute;left:0;top:501px;width:2100px;height:39px"><span class="t" style="left:433.5px;color:#8c8c8c">[18:48:35]</span><span class="t" style="left:630.8px;color:#40a0c8">31</span><span class="t" style="left:911px;color:#a6d83a;">[</span><span class="t" style="left:927px;color:#f59b3c;font-style:italic;">-N</span><span class="t" style="left:975px;color:#ffffff;">nodeinfo_option</span><span class="t" style="left:1215px;color:#a6d83a;">]</span><span class="t" style="left:1247px;color:#a6d83a;">[</span><span class="t" style="left:1263px;color:#f59b3c;font-style:italic;">-p</span><span class="t" style="left:1311px;color:#ffffff;">pattern</span><span class="t" style="left:1423px;color:#a6d83a;">]</span><span class="t" style="left:1455px;color:#a6d83a;">[</span><span class="t" style="left:1471px;color:#f59b3c;font-style:italic;">-Q</span><span class="t" style="left:1519px;color:#ffffff;">tclass</span><span class="t" style="left:1615px;color:#a6d83a;">]</span><span class="t" style="left:1647px;color:#a6d83a;">[</span><span class="t" style="left:1663px;color:#f59b3c;font-style:italic;">-s</span><span class="t" style="left:1711px;color:#ffffff;">packetsize</span><span class="t" style="left:1871px;color:#a6d83a;">]</span></div><div style="position:absolute;left:0;top:540px;width:2100px;height:39px"><span class="t" style="left:433.5px;color:#8c8c8c">[18:48:35]</span><span class="t" style="left:630.8px;color:#40a0c8">32</span><span class="t" style="left:911px;color:#a6d83a;">[</span><span class="t" style="left:927px;color:#f59b3c;font-style:italic;">-S</span><span class="t" style="left:975px;color:#ffffff;">sndbuf</span><span class="t" style="left:1071px;color:#a6d83a;">]</span><span class="t" style="left:1103px;color:#a6d83a;">[</span><span class="t" style="left:1119px;color:#f59b3c;font-style:italic;">-t</span><span class="t" style="left:1167px;color:#ffffff;">ttl</span><span class="t" style="left:1215px;color:#a6d83a;">]</span><span class="t" style="left:1247px;color:#a6d83a;">[</span><span class="t" style="left:1263px;color:#f59b3c;font-style:italic;">-T</span><span class="t" style="left:1311px;color:#ffffff;">timestamp_option</span><span class="t" style="left:1567px;color:#a6d83a;">]</span><span class="t" style="left:1599px;color:#a6d83a;">[</span><span class="t" style="left:1615px;color:#f59b3c;font-style:italic;">-w</span><span class="t" style="left:1663px;color:#ffffff;">deadline</span><span class="t" style="left:1791px;color:#a6d83a;">]</span></div><div style="position:absolute;left:0;top:579px;width:2100px;height:39px"><span class="t" style="left:433.5px;color:#8c8c8c">[18:48:35]</span><span class="t" style="left:630.8px;color:#40a0c8">33</span><span class="t" style="left:911px;color:#a6d83a;">[</span><span class="t" style="left:927px;color:#f59b3c;font-style:italic;">-W</span><span class="t" style="left:975px;color:#ffffff;">timeout</span><span class="t" style="left:1087px;color:#a6d83a;">]</span><span class="t" style="left:1119px;color:#ffffff;">destination</span></div><div style="position:absolute;left:703px;top:618px;width:266px;height:39px;background:#323232"></div><div style="position:absolute;left:969px;top:618px;width:64px;height:39px;background:#6c80d2"></div><div style="position:absolute;left:0;top:618px;width:2100px;height:39px"><span class="t" style="left:433.5px;color:#8c8c8c">[18:48:37]</span><span class="t" style="left:630.8px;color:#40a0c8">34</span><span class="t sy" style="left:721.5px;color:#e0306e;font-size:25px;font-weight:bold">✘</span><span class="t" style="left:761px;color:#fff">king@MACBOOK</span><svg style="position:absolute;left:969px;top:0" width="16" height="39" viewBox="0 0 16 39"><path d="M0 0L13.5 19.5L0 39Z" fill="#323232"/></svg><span class="t" style="left:1001px;color:#343a58;top:1.7px">~</span><svg style="position:absolute;left:1033px;top:0" width="16" height="39" viewBox="0 0 16 39"><path d="M0 0L13.5 19.5L0 39Z" fill="#6c80d2"/></svg><span class="t" style="left:1065px;color:#5ad4e6">ll</span><span class="t" style="left:1113px;color:#e6d86e">./images</span></div><div style="position:absolute;left:0;top:657px;width:2100px;height:39px"><span class="t" style="left:433.5px;color:#8c8c8c">[18:48:37]</span><span class="t" style="left:630.8px;color:#40a0c8">35</span><span class="t" style="left:703px;color:#ffffff;">total</span><span class="t" style="left:799px;color:#ffffff;">12K</span></div><div style="position:absolute;left:0;top:696px;width:2100px;height:39px"><span class="t" style="left:433.5px;color:#8c8c8c">[18:48:37]</span><span class="t" style="left:630.8px;color:#40a0c8">36</span><span class="t" style="left:703px;color:#b07ee0;">d</span><span class="t" style="left:719px;color:#62a8e0;">r</span><span class="t" style="left:735px;color:#e0a63c;">w</span><span class="t" style="left:751px;color:#ee4c6e;">x</span><span class="t" style="left:767px;color:#a6d83a;">------</span><span class="t" style="left:879px;color:#b48ce6;">1</span><span class="t" style="left:911px;color:#ffffff;">king</span><span class="t" style="left:991px;color:#ffffff;">king</span><span class="t" style="left:1071px;color:#ffffff;">4.0K</span><span class="t" style="left:1151px;color:#a6d83a;">Aug</span><span class="t" style="left:1215px;color:#b48ce6;">20</span><span class="t" style="left:1263px;color:#a6d83a;">03:55</span><span class="t" style="left:1359px;color:#7c96d8;">CUI</span></div><div style="position:absolute;left:0;top:735px;width:2100px;height:39px"><span class="t" style="left:433.5px;color:#8c8c8c">[18:48:37]</span><span class="t" style="left:630.8px;color:#40a0c8">37</span><span class="t" style="left:703px;color:#b07ee0;">d</span><span class="t" style="left:719px;color:#62a8e0;">r</span><span class="t" style="left:735px;color:#e0a63c;">w</span><span class="t" style="left:751px;color:#ee4c6e;">x</span><span class="t" style="left:767px;color:#a6d83a;">------</span><span class="t" style="left:879px;color:#b48ce6;">1</span><span class="t" style="left:911px;color:#ffffff;">king</span><span class="t" style="left:991px;color:#ffffff;">king</span><span class="t" style="left:1071px;color:#ffffff;">4.0K</span><span class="t" style="left:1151px;color:#a6d83a;">Aug</span><span class="t" style="left:1215px;color:#b48ce6;">20</span><span class="t" style="left:1263px;color:#a6d83a;">03:49</span><span class="t" style="left:1359px;color:#7c96d8;">Logs</span></div><div style="position:absolute;left:0;top:774px;width:2100px;height:39px"><span class="t" style="left:433.5px;color:#8c8c8c">[18:48:37]</span><span class="t" style="left:630.8px;color:#40a0c8">38</span><span class="t" style="left:703px;color:#a6d83a;">-</span><span class="t" style="left:719px;color:#62a8e0;">r</span><span class="t" style="left:735px;color:#e0a63c;">w</span><span class="t" style="left:751px;color:#ee4c6e;">x</span><span class="t" style="left:767px;color:#a6d83a;">------</span><span class="t" style="left:879px;color:#b48ce6;">1</span><span class="t" style="left:911px;color:#ffffff;">king</span><span class="t" style="left:991px;color:#ffffff;">king</span><span class="t" style="left:1071px;color:#ffffff;"> 11K</span><span class="t" style="left:1151px;color:#a6d83a;">Aug</span><span class="t" style="left:1215px;color:#b48ce6;">20</span><span class="t" style="left:1263px;color:#a6d83a;">03:45</span><span class="t" style="left:1359px;color:#8cc63c;">components.xml</span></div><div style="position:absolute;left:703px;top:813px;width:224px;height:39px;background:#323232"></div><div style="position:absolute;left:927px;top:813px;width:64px;height:39px;background:#6c80d2"></div><div style="position:absolute;left:0;top:813px;width:2100px;height:39px"><span class="t" style="left:433.5px;color:#8c8c8c">[18:48:42]</span><span class="t" style="left:630.8px;color:#40a0c8">39</span><span class="t" style="left:719px;color:#fff">king@MACBOOK</span><svg style="position:absolute;left:927px;top:0" width="16" height="39" viewBox="0 0 16 39"><path d="M0 0L13.5 19.5L0 39Z" fill="#323232"/></svg><span class="t" style="left:959px;color:#343a58;top:1.7px">~</span><svg style="position:absolute;left:991px;top:0" width="16" height="39" viewBox="0 0 16 39"><path d="M0 0L13.5 19.5L0 39Z" fill="#6c80d2"/></svg><span class="t" style="left:1023px;color:#e6d86e">./true_color.sh</span></div><div style="position:absolute;left:703px;top:852px;width:1232px;height:39px;background:linear-gradient(90deg,rgb(255, 0, 0) 8px,rgb(242, 26, 13) 72px,rgb(229, 53, 26) 136px,rgb(215, 80, 40) 200px,rgb(202, 107, 53) 264px,rgb(188, 134, 67) 328px,rgb(175, 161, 80) 392px,rgb(162, 187, 93) 456px,rgb(148, 214, 107) 520px,rgb(135, 241, 120) 584px,rgb(121, 242, 134) 648px,rgb(108, 215, 147) 712px,rgb(94, 188, 161) 776px,rgb(81, 162, 174) 840px,rgb(68, 135, 187) 904px,rgb(54, 108, 201) 968px,rgb(41, 81, 214) 1032px,rgb(27, 54, 228) 1096px,rgb(14, 27, 241) 1160px,rgb(0, 0, 255) 1224px,rgb(0, 0, 255) 1224px)"></div><div style="position:absolute;left:0;top:852px;width:2100px;height:39px"><span class="t" style="left:433.5px;color:#8c8c8c">[18:48:42]</span><span class="t" style="left:630.8px;color:#40a0c8">40</span><span class="t" style="left:703px;color:rgb(0,255,255);">/</span><span class="t" style="left:719px;color:rgb(3,249,252);">\</span><span class="t" style="left:735px;color:rgb(6,242,249);">/</span><span class="t" style="left:751px;color:rgb(10,235,245);">\</span><span class="t" style="left:767px;color:rgb(13,229,242);">/</span><span class="t" style="left:783px;color:rgb(16,222,239);">\</span><span class="t" style="left:799px;color:rgb(20,215,235);">/</span><span class="t" style="left:815px;color:rgb(23,209,232);">\</span><span class="t" style="left:831px;color:rgb(26,202,229);">/</span><span class="t" style="left:847px;color:rgb(30,195,225);">\</span><span class="t" style="left:863px;color:rgb(33,188,222);">/</span><span class="t" style="left:879px;color:rgb(36,182,219);">\</span><span class="t" style="left:895px;color:rgb(40,175,215);">/</span><span class="t" style="left:911px;color:rgb(43,168,212);">\</span><span class="t" style="left:927px;color:rgb(46,162,209);">/</span><span class="t" style="left:943px;color:rgb(50,155,205);">\</span><span class="t" style="left:959px;color:rgb(53,148,202);">/</span><span class="t" style="left:975px;color:rgb(57,141,198);">\</span><span class="t" style="left:991px;color:rgb(60,135,195);">/</span><span class="t" style="left:1007px;color:rgb(63,128,192);">\</span><span class="t" style="left:1023px;color:rgb(67,121,188);">/</span><span class="t" style="left:1039px;color:rgb(70,115,185);">\</span><span class="t" style="left:1055px;color:rgb(73,108,182);">/</span><span class="t" style="left:1071px;color:rgb(77,101,178);">\</span><span class="t" style="left:1087px;color:rgb(80,94,175);">/</span><span class="t" style="left:1103px;color:rgb(83,88,172);">\</span><span class="t" style="left:1119px;color:rgb(87,81,168);">/</span><span class="t" style="left:1135px;color:rgb(90,74,165);">\</span><span class="t" style="left:1151px;color:rgb(93,68,162);">/</span><span class="t" style="left:1167px;color:rgb(97,61,158);">\</span><span class="t" style="left:1183px;color:rgb(100,54,155);">/</span><span class="t" style="left:1199px;color:rgb(104,47,151);">\</span><span class="t" style="left:1215px;color:rgb(107,41,148);">/</span><span class="t" style="left:1231px;color:rgb(110,34,145);">\</span><span class="t" style="left:1247px;color:rgb(114,27,141);">/</span><span class="t" style="left:1263px;color:rgb(117,21,138);">\</span><span class="t" style="left:1279px;color:rgb(120,14,135);">/</span><span class="t" style="left:1295px;color:rgb(124,7,131);">\</span><span class="t" style="left:1311px;color:rgb(127,0,128);">/</span><span class="t" style="left:1327px;color:rgb(130,6,125);">\</span><span class="t" style="left:1343px;color:rgb(134,13,121);">/</span><span class="t" style="left:1359px;color:rgb(137,20,118);">\</span><span class="t" style="left:1375px;color:rgb(140,26,115);">/</span><span class="t" style="left:1391px;color:rgb(144,33,111);">\</span><span class="t" style="left:1407px;color:rgb(147,40,108);">/</span><span class="t" style="left:1423px;color:rgb(150,46,105);">\</span><span class="t" style="left:1439px;color:rgb(154,53,101);">/</span><span class="t" style="left:1455px;color:rgb(157,60,98);">\</span><span class="t" style="left:1471px;color:rgb(161,67,94);">/</span><span class="t" style="left:1487px;color:rgb(164,73,91);">\</span><span class="t" style="left:1503px;color:rgb(167,80,88);">/</span><span class="t" style="left:1519px;color:rgb(171,87,84);">\</span><span class="t" style="left:1535px;color:rgb(174,93,81);">/</span><span class="t" style="left:1551px;color:rgb(177,100,78);">\</span><span class="t" style="left:1567px;color:rgb(181,107,74);">/</span><span class="t" style="left:1583px;color:rgb(184,114,71);">\</span><span class="t" style="left:1599px;color:rgb(187,120,68);">/</span><span class="t" style="left:1615px;color:rgb(191,127,64);">\</span><span class="t" style="left:1631px;color:rgb(194,134,61);">/</span><span class="t" style="left:1647px;color:rgb(197,140,58);">\</span><span class="t" style="left:1663px;color:rgb(201,147,54);">/</span><span class="t" style="left:1679px;color:rgb(204,154,51);">\</span><span class="t" style="left:1695px;color:rgb(208,161,47);">/</span><span class="t" style="left:1711px;color:rgb(211,167,44);">\</span><span class="t" style="left:1727px;color:rgb(214,174,41);">/</span><span class="t" style="left:1743px;color:rgb(218,181,37);">\</span><span class="t" style="left:1759px;color:rgb(221,187,34);">/</span><span class="t" style="left:1775px;color:rgb(224,194,31);">\</span><span class="t" style="left:1791px;color:rgb(228,201,27);">/</span><span class="t" style="left:1807px;color:rgb(231,208,24);">\</span><span class="t" style="left:1823px;color:rgb(234,214,21);">/</span><span class="t" style="left:1839px;color:rgb(238,221,17);">\</span><span class="t" style="left:1855px;color:rgb(241,228,14);">/</span><span class="t" style="left:1871px;color:rgb(244,234,11);">\</span><span class="t" style="left:1887px;color:rgb(248,241,7);">/</span><span class="t" style="left:1903px;color:rgb(251,248,4);">\</span><span class="t" style="left:1919px;color:rgb(255,255,0);">/</span></div><div style="position:absolute;left:703px;top:891px;width:224px;height:39px;background:#323232"></div><div style="position:absolute;left:927px;top:891px;width:64px;height:39px;background:#6c80d2"></div><div style="position:absolute;left:0;top:891px;width:2100px;height:39px"><span class="t" style="left:433.5px;color:#8c8c8c">[18:48:43]</span><span class="t" style="left:630.8px;color:#40a0c8">41</span><span class="t" style="left:719px;color:#fff">king@MACBOOK</span><svg style="position:absolute;left:927px;top:0" width="16" height="39" viewBox="0 0 16 39"><path d="M0 0L13.5 19.5L0 39Z" fill="#323232"/></svg><span class="t" style="left:959px;color:#343a58;top:1.7px">~</span><svg style="position:absolute;left:991px;top:0" width="16" height="39" viewBox="0 0 16 39"><path d="M0 0L13.5 19.5L0 39Z" fill="#6c80d2"/></svg><span class="t" style="left:1023px;color:#5ad4e6;">for</span><span class="t" style="left:1087px;color:#ffffff;">i</span><span class="t" style="left:1119px;color:#ffffff;">in</span><span class="t" style="left:1167px;color:#a6d83a;">{</span><span class="t" style="left:1183px;color:#b48ce6;">128512</span><span class="t" style="left:1279px;color:#ffffff;">..128589</span><span class="t" style="left:1407px;color:#a6d83a;">}</span><span class="t" style="left:1423px;color:#a6d83a;">;</span><span class="t" style="left:1455px;color:#ffffff;">do</span><span class="t" style="left:1503px;color:#ffffff;">printf</span><span class="t" style="left:1615px;color:#e6d86e;">"</span><span class="t" style="left:1631px;color:#b48ce6;">\U</span><span class="t" style="left:1663px;color:#e6d86e;">$(echo</span><span class="t" style="left:1775px;color:#e6d86e;">"</span><span class="t" style="left:1791px;color:#ffffff;">ibase</span><span class="t" style="left:1871px;color:#a6d83a;">=</span><span class="t" style="left:1887px;color:#b48ce6;">10</span><span class="t" style="left:1919px;color:#a6d83a;">;</span><span class="t" style="left:1935px;color:#ffffff;">obase</span><span class="t" style="left:2015px;color:#a6d83a;">=</span><span class="t" style="left:2031px;color:#b48ce6;">16</span><span class="t" style="left:2063px;color:#a6d83a;">;</span></div><div style="position:absolute;left:0;top:930px;width:2100px;height:39px"><span class="t" style="left:433.5px;color:#8c8c8c">[18:48:43]</span><span class="t" style="left:646.8px;color:#40a0c8">-</span><span class="t" style="left:703px;color:#a6d83a;">$</span><span class="t" style="left:719px;color:#ffffff;">i</span><span class="t" style="left:735px;color:#a6d83a;">;</span><span class="t" style="left:751px;color:#e6d86e;">"</span><span class="t" style="left:783px;color:#e6d86e;">|</span><span class="t" style="left:815px;color:#e6d86e;">bc)</span><span class="t" style="left:879px;color:#e6d86e;">"</span><span class="t" style="left:895px;color:#a6d83a;">;</span><span class="t" style="left:927px;color:#ffffff;">done</span><span class="t" style="left:991px;color:#a6d83a;">;</span><span class="t" style="left:1023px;color:#ffffff;">echo</span></div><div style="position:absolute;left:0;top:969px;width:2100px;height:39px"><span class="t" style="left:433.5px;color:#8c8c8c">[18:48:44]</span><span class="t" style="left:630.8px;color:#40a0c8">42</span><svg class="em" style="left:707.9px;top:7.5px" width="31" height="31" viewBox="0 0 30 30" role="img" aria-label="😀"><title>😀</title><circle cx="15" cy="15" r="13.4" fill="#fcc21f" stroke="#0c0c0c" stroke-width="1.5"/><ellipse cx="10.2" cy="12.2" rx="1.7" ry="2.3" fill="#3b2508"/><ellipse cx="19.8" cy="12.2" rx="1.7" ry="2.3" fill="#3b2508"/><path d="M7.6 16.6H22.4Q22 24.6 15 24.6Q8 24.6 7.6 16.6Z" fill="#3b2508"/><path d="M8.6 17H21.4V19.4H8.6Z" fill="#fff"/><path d="M11 23.3Q15 20.8 19 23.3Q15 25.4 11 23.3Z" fill="#e8543c"/></svg><svg class="em" style="left:760.9px;top:7.5px" width="31" height="31" viewBox="0 0 30 30" role="img" aria-label="😁"><title>😁</title><circle cx="15" cy="15" r="13.4" fill="#fcc21f" stroke="#0c0c0c" stroke-width="1.5"/><path d="M7.4 13.2Q10.2 9 13 13.2M17 13.2Q19.8 9 22.6 13.2" fill="none" stroke="#3b2508" stroke-width="1.7" stroke-linecap="round"/><path d="M7.4 16.4H22.6Q22 23.6 15 23.6Q8 23.6 7.4 16.4Z" fill="#fff" stroke="#3b2508" stroke-width="1.3"/><path d="M11.2 16.6V22.8M15 16.6V23.4M18.8 16.6V22.8M7.8 19.8H22.2" stroke="#3b2508" stroke-width="0.9"/></svg><svg class="em" style="left:813.9px;top:7.5px" width="31" height="31" viewBox="0 0 30 30" role="img" aria-label="😂"><title>😂</title><circle cx="15" cy="15" r="13.4" fill="#fcc21f" stroke="#0c0c0c" stroke-width="1.5"/><path d="M7.4 13.2Q10.2 9 13 13.2M17 13.2Q19.8 9 22.6 13.2" fill="none" stroke="#3b2508" stroke-width="1.7" stroke-linecap="round"/><path d="M7.6 16.6H22.4Q22 24.6 15 24.6Q8 24.6 7.6 16.6Z" fill="#3b2508"/><path d="M8.6 17H21.4V19.4H8.6Z" fill="#fff"/><path d="M11 23.3Q15 20.8 19 23.3Q15 25.4 11 23.3Z" fill="#e8543c"/><path d="M1.4 19.4Q3.4 14.6 7.6 15.4Q8.8 20.6 5 22Q2 22.6 1.4 19.4ZM28.6 19.4Q26.6 14.6 22.4 15.4Q21.2 20.6 25 22Q28 22.6 28.6 19.4Z" fill="#3aa0e8"/></svg><svg class="em" style="left:866.9px;top:7.5px" width="31" height="31" viewBox="0 0 30 30" role="img" aria-label="😃"><title>😃</title><circle cx="15" cy="15" r="13.4" fill="#fcc21f" stroke="#0c0c0c" stroke-width="1.5"/><ellipse cx="10.2" cy="12.2" rx="1.7" ry="2.3" fill="#3b2508"/><ellipse cx="19.8" cy="12.2" rx="1.7" ry="2.3" fill="#3b2508"/><path d="M7.6 16.6H22.4Q22 24.6 15 24.6Q8 24.6 7.6 16.6Z" fill="#3b2508"/><path d="M8.6 17H21.4V19.4H8.6Z" fill="#fff"/><path d="M11 23.3Q15 20.8 19 23.3Q15 25.4 11 23.3Z" fill="#e8543c"/></svg><svg class="em" style="left:919.9px;top:7.5px" width="31" height="31" viewBox="0 0 30 30" role="img" aria-label="😄"><title>😄</title><circle cx="15" cy="15" r="13.4" fill="#fcc21f" stroke="#0c0c0c" stroke-width="1.5"/><path d="M7.4 13.2Q10.2 9 13 13.2M17 13.2Q19.8 9 22.6 13.2" fill="none" stroke="#3b2508" stroke-width="1.7" stroke-linecap="round"/><path d="M7.6 16.6H22.4Q22 24.6 15 24.6Q8 24.6 7.6 16.6Z" fill="#3b2508"/><path d="M8.6 17H21.4V19.4H8.6Z" fill="#fff"/><path d="M11 23.3Q15 20.8 19 23.3Q15 25.4 11 23.3Z" fill="#e8543c"/></svg><svg class="em" style="left:972.9px;top:7.5px" width="31" height="31" viewBox="0 0 30 30" role="img" aria-label="😅"><title>😅</title><circle cx="15" cy="15" r="13.4" fill="#fcc21f" stroke="#0c0c0c" stroke-width="1.5"/><path d="M7.4 13.2Q10.2 9 13 13.2M17 13.2Q19.8 9 22.6 13.2" fill="none" stroke="#3b2508" stroke-width="1.7" stroke-linecap="round"/><path d="M7.6 16.6H22.4Q22 24.6 15 24.6Q8 24.6 7.6 16.6Z" fill="#3b2508"/><path d="M8.6 17H21.4V19.4H8.6Z" fill="#fff"/><path d="M11 23.3Q15 20.8 19 23.3Q15 25.4 11 23.3Z" fill="#e8543c"/><path d="M24.4 2.4Q27.8 6.4 27.2 8.6A2.9 2.9 0 0 1 21.6 8.4Q21.6 6 24.4 2.4Z" fill="#3aa0e8"/></svg><svg class="em" style="left:1025.9px;top:7.5px" width="31" height="31" viewBox="0 0 30 30" role="img" aria-label="😆"><title>😆</title><circle cx="15" cy="15" r="13.4" fill="#fcc21f" stroke="#0c0c0c" stroke-width="1.5"/><path d="M7.4 9.8L12.6 12.4L7.4 15M22.6 9.8L17.4 12.4L22.6 15" fill="none" stroke="#3b2508" stroke-width="1.7" stroke-linecap="round" stroke-linejoin="round"/><path d="M7.6 16.6H22.4Q22 24.6 15 24.6Q8 24.6 7.6 16.6Z" fill="#3b2508"/><path d="M8.6 17H21.4V19.4H8.6Z" fill="#fff"/><path d="M11 23.3Q15 20.8 19 23.3Q15 25.4 11 23.3Z" fill="#e8543c"/></svg><svg class="em" style="left:1078.9px;top:7.5px" width="31" height="31" viewBox="0 0 30 30" role="img" aria-label="😇"><title>😇</title><circle cx="15" cy="15" r="13.4" fill="#fcc21f" stroke="#0c0c0c" stroke-width="1.5"/><path d="M7.4 13.2Q10.2 9 13 13.2M17 13.2Q19.8 9 22.6 13.2" fill="none" stroke="#3b2508" stroke-width="1.7" stroke-linecap="round"/><path d="M8.6 18Q15 25.4 21.4 18" fill="none" stroke="#3b2508" stroke-width="1.8" stroke-linecap="round"/><ellipse cx="15" cy="3.6" rx="9.4" ry="2.6" fill="none" stroke="#4ab4f0" stroke-width="1.7"/></svg><svg class="em" style="left:1131.9px;top:7.5px" width="31" height="31" viewBox="0 0 30 30" role="img" aria-label="😈"><title>😈</title><path d="M3.6 9.6Q1.4 4 3 1.4Q7 2 10.4 5.6ZM26.4 9.6Q28.6 4 27 1.4Q23 2 19.6 5.6Z" fill="#e8341c" stroke="#0c0c0c" stroke-width="1.2"/><circle cx="15" cy="15" r="13.4" fill="#e8341c" stroke="#0c0c0c" stroke-width="1.5"/><path d="M6.8 9L12.8 11.6M23.2 9L17.2 11.6" stroke="#2a0606" stroke-width="1.6" stroke-linecap="round"/><ellipse cx="10.6" cy="13.399999999999999" rx="1.6" ry="1.9" fill="#2a0606"/><ellipse cx="19.400000000000002" cy="13.399999999999999" rx="1.6" ry="1.9" fill="#2a0606"/><path d="M8.6 18Q15 25.4 21.4 18" fill="none" stroke="#2a0606" stroke-width="1.8" stroke-linecap="round"/></svg><svg class="em" style="left:1184.9px;top:7.5px" width="31" height="31" viewBox="0 0 30 30" role="img" aria-label="😉"><title>😉</title><circle cx="15" cy="15" r="13.4" fill="#fcc21f" stroke="#0c0c0c" stroke-width="1.5"/><ellipse cx="10.2" cy="12.2" rx="1.7" ry="2.3" fill="#3b2508"/><path d="M17 12.8Q19.8 10 22.6 12.4" fill="none" stroke="#3b2508" stroke-width="1.7" stroke-linecap="round"/><path d="M8.6 18Q15 25.4 21.4 18" fill="none" stroke="#3b2508" stroke-width="1.8" stroke-linecap="round"/></svg><svg class="em" style="left:1237.9px;top:7.5px" width="31" height="31" viewBox="0 0 30 30" role="img" aria-label="😊"><title>😊</title><circle cx="15" cy="15" r="13.4" fill="#fcc21f" stroke="#0c0c0c" stroke-width="1.5"/><ellipse cx="6.6" cy="17.6" rx="2.6" ry="1.9" fill="#f4845c" opacity=".85"/><ellipse cx="23.4" cy="17.6" rx="2.6" ry="1.9" fill="#f4845c" opacity=".85"/><path d="M7.4 13.2Q10.2 9 13 13.2M17 13.2Q19.8 9 22.6 13.2" fill="none" stroke="#3b2508" stroke-width="1.7" stroke-linecap="round"/><path d="M8.6 18Q15 25.4 21.4 18" fill="none" stroke="#3b2508" stroke-width="1.8" stroke-linecap="round"/></svg><svg class="em" style="left:1290.9px;top:7.5px" width="31" height="31" viewBox="0 0 30 30" role="img" aria-label="😋"><title>😋</title><circle cx="15" cy="15" r="13.4" fill="#fcc21f" stroke="#0c0c0c" stroke-width="1.5"/><path d="M7.4 13.2Q10.2 9 13 13.2M17 13.2Q19.8 9 22.6 13.2" fill="none" stroke="#3b2508" stroke-width="1.7" stroke-linecap="round"/><path d="M8.6 18Q15 25.4 21.4 18" fill="none" stroke="#3b2508" stroke-width="1.8" stroke-linecap="round"/><path d="M18.6 21.4Q22.6 20.6 24.4 23.6Q22.6 27 19.6 24.6Z" fill="#e8432c"/></svg><svg class="em" style="left:1343.9px;top:7.5px" width="31" height="31" viewBox="0 0 30 30" role="img" aria-label="😌"><title>😌</title><circle cx="15" cy="15" r="13.4" fill="#fcc21f" stroke="#0c0c0c" stroke-width="1.5"/><path d="M7.4 11.6Q10.2 15 13 11.6M17 11.6Q19.8 15 22.6 11.6" fill="none" stroke="#3b2508" stroke-width="1.6" stroke-linecap="round"/><path d="M10 19Q15 23.4 20 19" fill="none" stroke="#3b2508" stroke-width="1.7" stroke-linecap="round"/></svg><svg class="em" style="left:1396.9px;top:7.5px" width="31" height="31" viewBox="0 0 30 30" role="img" aria-label="😍"><title>😍</title><circle cx="15" cy="15" r="13.4" fill="#fcc21f" stroke="#0c0c0c" stroke-width="1.5"/><path d="M9.799999999999999 15.4L6.199999999999999 11.6A2 2 0 0 1 9.799999999999999 9.9A2 2 0 0 1 13.399999999999999 11.6Z" fill="#e8261e"/><path d="M20.2 15.4L16.599999999999998 11.6A2 2 0 0 1 20.2 9.9A2 2 0 0 1 23.8 11.6Z" fill="#e8261e"/><path d="M7.6 16.6H22.4Q22 24.6 15 24.6Q8 24.6 7.6 16.6Z" fill="#3b2508"/><path d="M8.6 17H21.4V19.4H8.6Z" fill="#fff"/><path d="M11 23.3Q15 20.8 19 23.3Q15 25.4 11 23.3Z" fill="#e8543c"/></svg><svg class="em" style="left:1449.9px;top:7.5px" width="31" height="31" viewBox="0 0 30 30" role="img" aria-label="😎"><title>😎</title><circle cx="15" cy="15" r="13.4" fill="#fcc21f" stroke="#0c0c0c" stroke-width="1.5"/><path d="M4.5 9.2H25.5V11.2Q25 16 20.5 16Q16.5 16 16 11.6H14Q13.5 16 9.5 16Q5 16 4.5 11.2Z" fill="#141414"/><path d="M8.6 18Q15 25.4 21.4 18" fill="none" stroke="#3b2508" stroke-width="1.8" stroke-linecap="round"/></svg><svg class="em" style="left:1502.9px;top:7.5px" width="31" height="31" viewBox="0 0 30 30" role="img" aria-label="😏"><title>😏</title><circle cx="15" cy="15" r="13.4" fill="#fcc21f" stroke="#0c0c0c" stroke-width="1.5"/><path d="M7.4 12.4H13M17 12.4H22.6" fill="none" stroke="#3b2508" stroke-width="1.7" stroke-linecap="round"/><path d="M11 21.4Q16.5 22.4 20.6 18.4" fill="none" stroke="#3b2508" stroke-width="1.8" stroke-linecap="round"/></svg><svg class="em" style="left:1555.9px;top:7.5px" width="31" height="31" viewBox="0 0 30 30" role="img" aria-label="😐"><title>😐</title><circle cx="15" cy="15" r="13.4" fill="#fcc21f" stroke="#0c0c0c" stroke-width="1.5"/><ellipse cx="10.2" cy="12.2" rx="1.7" ry="2.3" fill="#3b2508"/><ellipse cx="19.8" cy="12.2" rx="1.7" ry="2.3" fill="#3b2508"/><path d="M9.6 20.6H20.4" stroke="#3b2508" stroke-width="1.8" stroke-linecap="round"/></svg><svg class="em" style="left:1608.9px;top:7.5px" width="31" height="31" viewBox="0 0 30 30" role="img" aria-label="😑"><title>😑</title><circle cx="15" cy="15" r="13.4" fill="#fcc21f" stroke="#0c0c0c" stroke-width="1.5"/><path d="M7.4 12.4H13M17 12.4H22.6" fill="none" stroke="#3b2508" stroke-width="1.7" stroke-linecap="round"/><path d="M9.6 20.6H20.4" stroke="#3b2508" stroke-width="1.8" stroke-linecap="round"/></svg><svg class="em" style="left:1661.9px;top:7.5px" width="31" height="31" viewBox="0 0 30 30" role="img" aria-label="😒"><title>😒</title><circle cx="15" cy="15" r="13.4" fill="#fcc21f" stroke="#0c0c0c" stroke-width="1.5"/><path d="M7.4 12.4H13M17 12.4H22.6" fill="none" stroke="#3b2508" stroke-width="1.7" stroke-linecap="round"/><path d="M9.6 22.4Q15 17.2 20.4 22.4" fill="none" stroke="#3b2508" stroke-width="1.8" stroke-linecap="round"/></svg><svg class="em" style="left:1714.9px;top:7.5px" width="31" height="31" viewBox="0 0 30 30" role="img" aria-label="😓"><title>😓</title><circle cx="15" cy="15" r="13.4" fill="#fcc21f" stroke="#0c0c0c" stroke-width="1.5"/><path d="M7.4 11.6Q10.2 15 13 11.6M17 11.6Q19.8 15 22.6 11.6" fill="none" stroke="#3b2508" stroke-width="1.6" stroke-linecap="round"/><path d="M9.6 22.4Q15 17.2 20.4 22.4" fill="none" stroke="#3b2508" stroke-width="1.8" stroke-linecap="round"/><path d="M24.4 2.4Q27.8 6.4 27.2 8.6A2.9 2.9 0 0 1 21.6 8.4Q21.6 6 24.4 2.4Z" fill="#3aa0e8"/></svg><svg class="em" style="left:1767.9px;top:7.5px" width="31" height="31" viewBox="0 0 30 30" role="img" aria-label="😔"><title>😔</title><circle cx="15" cy="15" r="13.4" fill="#fcc21f" stroke="#0c0c0c" stroke-width="1.5"/><path d="M7.4 11.6Q10.2 15 13 11.6M17 11.6Q19.8 15 22.6 11.6" fill="none" stroke="#3b2508" stroke-width="1.6" stroke-linecap="round"/><path d="M10 19Q15 23.4 20 19" fill="none" stroke="#3b2508" stroke-width="1.7" stroke-linecap="round"/></svg><svg class="em" style="left:1820.9px;top:7.5px" width="31" height="31" viewBox="0 0 30 30" role="img" aria-label="😕"><title>😕</title><circle cx="15" cy="15" r="13.4" fill="#fcc21f" stroke="#0c0c0c" stroke-width="1.5"/><ellipse cx="10.2" cy="12.2" rx="1.7" ry="2.3" fill="#3b2508"/><ellipse cx="19.8" cy="12.2" rx="1.7" ry="2.3" fill="#3b2508"/><path d="M10 22Q15 19 20.4 19.2" fill="none" stroke="#3b2508" stroke-width="1.8" stroke-linecap="round"/></svg><svg class="em" style="left:1873.9px;top:7.5px" width="31" height="31" viewBox="0 0 30 30" role="img" aria-label="😖"><title>😖</title><circle cx="15" cy="15" r="13.4" fill="#fcc21f" stroke="#0c0c0c" stroke-width="1.5"/><path d="M7.4 9.8L12.6 12.4L7.4 15M22.6 9.8L17.4 12.4L22.6 15" fill="none" stroke="#3b2508" stroke-width="1.7" stroke-linecap="round" stroke-linejoin="round"/><path d="M8.6 21.4L10.8 19.6L13 21.4L15 19.6L17 21.4L19.2 19.6L21.4 21.4" fill="none" stroke="#3b2508" stroke-width="1.5" stroke-linejoin="round" stroke-linecap="round"/></svg><svg class="em" style="left:1926.9px;top:7.5px" width="31" height="31" viewBox="0 0 30 30" role="img" aria-label="😗"><title>😗</title><circle cx="15" cy="15" r="13.4" fill="#fcc21f" stroke="#0c0c0c" stroke-width="1.5"/><ellipse cx="10.2" cy="12.2" rx="1.7" ry="2.3" fill="#3b2508"/><ellipse cx="19.8" cy="12.2" rx="1.7" ry="2.3" fill="#3b2508"/><path d="M14 17.6Q17.4 18.4 15 20.4Q17.6 21.8 14 23.4" fill="none" stroke="#3b2508" stroke-width="1.5" stroke-linecap="round"/></svg><svg class="em" style="left:1979.9px;top:7.5px" width="31" height="31" viewBox="0 0 30 30" role="img" aria-label="😘"><title>😘</title><circle cx="15" cy="15" r="13.4" fill="#fcc21f" stroke="#0c0c0c" stroke-width="1.5"/><ellipse cx="10.2" cy="12.2" rx="1.7" ry="2.3" fill="#3b2508"/><path d="M17 12.8Q19.8 10 22.6 12.4" fill="none" stroke="#3b2508" stroke-width="1.7" stroke-linecap="round"/><path d="M14 17.6Q17.4 18.4 15 20.4Q17.6 21.8 14 23.4" fill="none" stroke="#3b2508" stroke-width="1.5" stroke-linecap="round"/><path d="M23.6 26.4L20 22.6A2 2 0 0 1 23.6 20.9A2 2 0 0 1 27.2 22.6Z" fill="#e8261e"/></svg><svg class="em" style="left:2032.9px;top:7.5px" width="31" height="31" viewBox="0 0 30 30" role="img" aria-label="😙"><title>😙</title><circle cx="15" cy="15" r="13.4" fill="#fcc21f" stroke="#0c0c0c" stroke-width="1.5"/><path d="M7.4 13.2Q10.2 9 13 13.2M17 13.2Q19.8 9 22.6 13.2" fill="none" stroke="#3b2508" stroke-width="1.7" stroke-linecap="round"/><path d="M14 17.6Q17.4 18.4 15 20.4Q17.6 21.8 14 23.4" fill="none" stroke="#3b2508" stroke-width="1.5" stroke-linecap="round"/></svg></div><div style="position:absolute;left:0;top:1008px;width:2100px;height:39px"><span class="t" style="left:433.5px;color:#8c8c8c">[18:48:44]</span><span class="t" style="left:646.8px;color:#40a0c8">-</span><svg class="em" style="left:707.9px;top:7.5px" width="31" height="31" viewBox="0 0 30 30" role="img" aria-label="😚"><title>😚</title><circle cx="15" cy="15" r="13.4" fill="#fcc21f" stroke="#0c0c0c" stroke-width="1.5"/><ellipse cx="6.6" cy="17.6" rx="2.6" ry="1.9" fill="#f4845c" opacity=".85"/><ellipse cx="23.4" cy="17.6" rx="2.6" ry="1.9" fill="#f4845c" opacity=".85"/><path d="M7.4 11.6Q10.2 15 13 11.6M17 11.6Q19.8 15 22.6 11.6" fill="none" stroke="#3b2508" stroke-width="1.6" stroke-linecap="round"/><path d="M14 17.6Q17.4 18.4 15 20.4Q17.6 21.8 14 23.4" fill="none" stroke="#3b2508" stroke-width="1.5" stroke-linecap="round"/></svg><svg class="em" style="left:760.9px;top:7.5px" width="31" height="31" viewBox="0 0 30 30" role="img" aria-label="😛"><title>😛</title><circle cx="15" cy="15" r="13.4" fill="#fcc21f" stroke="#0c0c0c" stroke-width="1.5"/><ellipse cx="10.2" cy="12.2" rx="1.7" ry="2.3" fill="#3b2508"/><ellipse cx="19.8" cy="12.2" rx="1.7" ry="2.3" fill="#3b2508"/><path d="M8.6 17.6Q15 21.6 21.4 17.6" fill="none" stroke="#3b2508" stroke-width="1.7" stroke-linecap="round"/><path d="M11.8 19.4H18.2V24Q18.2 27.6 15 27.6Q11.8 27.6 11.8 24Z" fill="#e8432c"/></svg><svg class="em" style="left:813.9px;top:7.5px" width="31" height="31" viewBox="0 0 30 30" role="img" aria-label="😜"><title>😜</title><circle cx="15" cy="15" r="13.4" fill="#fcc21f" stroke="#0c0c0c" stroke-width="1.5"/><path d="M7.4 12.8Q10.2 10 13 12.4" fill="none" stroke="#3b2508" stroke-width="1.7" stroke-linecap="round"/><circle cx="19.8" cy="11.6" r="3.4" fill="#fff"/><circle cx="20.1" cy="11.6" r="1.5" fill="#3b2508"/><path d="M8.6 17.6Q15 21.6 21.4 17.6" fill="none" stroke="#3b2508" stroke-width="1.7" stroke-linecap="round"/><path d="M11.8 19.4H18.2V24Q18.2 27.6 15 27.6Q11.8 27.6 11.8 24Z" fill="#e8432c"/></svg><svg class="em" style="left:866.9px;top:7.5px" width="31" height="31" viewBox="0 0 30 30" role="img" aria-label="😝"><title>😝</title><circle cx="15" cy="15" r="13.4" fill="#fcc21f" stroke="#0c0c0c" stroke-width="1.5"/><path d="M7.4 9.8L12.6 12.4L7.4 15M22.6 9.8L17.4 12.4L22.6 15" fill="none" stroke="#3b2508" stroke-width="1.7" stroke-linecap="round" stroke-linejoin="round"/><path d="M8.6 17.6Q15 21.6 21.4 17.6" fill="none" stroke="#3b2508" stroke-width="1.7" stroke-linecap="round"/><path d="M11.8 19.4H18.2V24Q18.2 27.6 15 27.6Q11.8 27.6 11.8 24Z" fill="#e8432c"/></svg><svg class="em" style="left:919.9px;top:7.5px" width="31" height="31" viewBox="0 0 30 30" role="img" aria-label="😞"><title>😞</title><circle cx="15" cy="15" r="13.4" fill="#fcc21f" stroke="#0c0c0c" stroke-width="1.5"/><path d="M7.4 11.6Q10.2 15 13 11.6M17 11.6Q19.8 15 22.6 11.6" fill="none" stroke="#3b2508" stroke-width="1.6" stroke-linecap="round"/><path d="M9.6 22.4Q15 17.2 20.4 22.4" fill="none" stroke="#3b2508" stroke-width="1.8" stroke-linecap="round"/></svg><svg class="em" style="left:972.9px;top:7.5px" width="31" height="31" viewBox="0 0 30 30" role="img" aria-label="😟"><title>😟</title><circle cx="15" cy="15" r="13.4" fill="#fcc21f" stroke="#0c0c0c" stroke-width="1.5"/><path d="M6.8 10.6L11.6 8.6M23.2 10.6L18.4 8.6" stroke="#3b2508" stroke-width="1.3" stroke-linecap="round"/><ellipse cx="10.2" cy="13.2" rx="1.6" ry="2.1" fill="#3b2508"/><ellipse cx="19.8" cy="13.2" rx="1.6" ry="2.1" fill="#3b2508"/><path d="M9.6 22.4Q15 17.2 20.4 22.4" fill="none" stroke="#3b2508" stroke-width="1.8" stroke-linecap="round"/></svg><svg class="em" style="left:1025.9px;top:7.5px" width="31" height="31" viewBox="0 0 30 30" role="img" aria-label="😠"><title>😠</title><circle cx="15" cy="15" r="13.4" fill="#fcc21f" stroke="#0c0c0c" stroke-width="1.5"/><path d="M6.8 9L12.8 11.6M23.2 9L17.2 11.6" stroke="#3b2508" stroke-width="1.6" stroke-linecap="round"/><ellipse cx="10.6" cy="13.399999999999999" rx="1.6" ry="1.9" fill="#3b2508"/><ellipse cx="19.400000000000002" cy="13.399999999999999" rx="1.6" ry="1.9" fill="#3b2508"/><path d="M9.6 22.4Q15 17.2 20.4 22.4" fill="none" stroke="#3b2508" stroke-width="1.8" stroke-linecap="round"/></svg><svg class="em" style="left:1078.9px;top:7.5px" width="31" height="31" viewBox="0 0 30 30" role="img" aria-label="😡"><title>😡</title><circle cx="15" cy="15" r="13.4" fill="#e8341c" stroke="#0c0c0c" stroke-width="1.5"/><path d="M6.8 9L12.8 11.6M23.2 9L17.2 11.6" stroke="#2a0606" stroke-width="1.6" stroke-linecap="round"/><ellipse cx="10.6" cy="13.399999999999999" rx="1.6" ry="1.9" fill="#2a0606"/><ellipse cx="19.400000000000002" cy="13.399999999999999" rx="1.6" ry="1.9" fill="#2a0606"/><path d="M9.6 22.4Q15 17.2 20.4 22.4" fill="none" stroke="#2a0606" stroke-width="1.8" stroke-linecap="round"/></svg><svg class="em" style="left:1131.9px;top:7.5px" width="31" height="31" viewBox="0 0 30 30" role="img" aria-label="😢"><title>😢</title><circle cx="15" cy="15" r="13.4" fill="#fcc21f" stroke="#0c0c0c" stroke-width="1.5"/><path d="M6.8 10.6L11.6 8.6M23.2 10.6L18.4 8.6" stroke="#3b2508" stroke-width="1.3" stroke-linecap="round"/><ellipse cx="10.2" cy="13.2" rx="1.6" ry="2.1" fill="#3b2508"/><ellipse cx="19.8" cy="13.2" rx="1.6" ry="2.1" fill="#3b2508"/><path d="M9.6 22.4Q15 17.2 20.4 22.4" fill="none" stroke="#3b2508" stroke-width="1.8" stroke-linecap="round"/><path d="M8.4 16.4Q11.4 20.4 10.8 22.4A2.8 2.8 0 0 1 5.6 22.2Q5.6 20 8.4 16.4Z" fill="#3aa0e8"/></svg><svg class="em" style="left:1184.9px;top:7.5px" width="31" height="31" viewBox="0 0 30 30" role="img" aria-label="😣"><title>😣</title><circle cx="15" cy="15" r="13.4" fill="#fcc21f" stroke="#0c0c0c" stroke-width="1.5"/><path d="M7.4 9.8L12.6 12.4L7.4 15M22.6 9.8L17.4 12.4L22.6 15" fill="none" stroke="#3b2508" stroke-width="1.7" stroke-linecap="round" stroke-linejoin="round"/><path d="M9.6 22.4Q15 17.2 20.4 22.4" fill="none" stroke="#3b2508" stroke-width="1.8" stroke-linecap="round"/></svg><svg class="em" style="left:1237.9px;top:7.5px" width="31" height="31" viewBox="0 0 30 30" role="img" aria-label="😤"><title>😤</title><circle cx="15" cy="15" r="13.4" fill="#fcc21f" stroke="#0c0c0c" stroke-width="1.5"/><path d="M6.8 9L12.8 11.6M23.2 9L17.2 11.6" stroke="#3b2508" stroke-width="1.6" stroke-linecap="round"/><ellipse cx="10.6" cy="13.399999999999999" rx="1.6" ry="1.9" fill="#3b2508"/><ellipse cx="19.400000000000002" cy="13.399999999999999" rx="1.6" ry="1.9" fill="#3b2508"/><path d="M11.4 19.6Q15 17.6 18.6 19.6" fill="none" stroke="#3b2508" stroke-width="1.5" stroke-linecap="round"/><circle cx="7.4" cy="24" r="3.6" fill="#fff"/><circle cx="22.6" cy="24" r="3.6" fill="#fff"/><circle cx="4.4" cy="25.6" r="2.4" fill="#fff"/><circle cx="25.6" cy="25.6" r="2.4" fill="#fff"/></svg><svg class="em" style="left:1290.9px;top:7.5px" width="31" height="31" viewBox="0 0 30 30" role="img" aria-label="😥"><title>😥</title><circle cx="15" cy="15" r="13.4" fill="#fcc21f" stroke="#0c0c0c" stroke-width="1.5"/><path d="M6.8 10.6L11.6 8.6M23.2 10.6L18.4 8.6" stroke="#3b2508" stroke-width="1.3" stroke-linecap="round"/><ellipse cx="10.2" cy="13.2" rx="1.6" ry="2.1" fill="#3b2508"/><ellipse cx="19.8" cy="13.2" rx="1.6" ry="2.1" fill="#3b2508"/><path d="M9.6 22.4Q15 17.2 20.4 22.4" fill="none" stroke="#3b2508" stroke-width="1.8" stroke-linecap="round"/><path d="M8.4 16.4Q11.4 20.4 10.8 22.4A2.8 2.8 0 0 1 5.6 22.2Q5.6 20 8.4 16.4Z" fill="#3aa0e8"/></svg><svg class="em" style="left:1343.9px;top:7.5px" width="31" height="31" viewBox="0 0 30 30" role="img" aria-label="😦"><title>😦</title><circle cx="15" cy="15" r="13.4" fill="#fcc21f" stroke="#0c0c0c" stroke-width="1.5"/><ellipse cx="10.2" cy="12.2" rx="1.7" ry="2.3" fill="#3b2508"/><ellipse cx="19.8" cy="12.2" rx="1.7" ry="2.3" fill="#3b2508"/><path d="M9.4 24Q9.8 17.6 15 17.6Q20.2 17.6 20.6 24Q15 21.8 9.4 24Z" fill="#3b2508"/></svg><svg class="em" style="left:1396.9px;top:7.5px" width="31" height="31" viewBox="0 0 30 30" role="img" aria-label="😧"><title>😧</title><circle cx="15" cy="15" r="13.4" fill="#fcc21f" stroke="#0c0c0c" stroke-width="1.5"/><path d="M6.8 10.6L11.6 8.6M23.2 10.6L18.4 8.6" stroke="#3b2508" stroke-width="1.3" stroke-linecap="round"/><ellipse cx="10.2" cy="13.2" rx="1.6" ry="2.1" fill="#3b2508"/><ellipse cx="19.8" cy="13.2" rx="1.6" ry="2.1" fill="#3b2508"/><path d="M9.4 24Q9.8 17.6 15 17.6Q20.2 17.6 20.6 24Q15 21.8 9.4 24Z" fill="#3b2508"/></svg><svg class="em" style="left:1449.9px;top:7.5px" width="31" height="31" viewBox="0 0 30 30" role="img" aria-label="😨"><title>😨</title><circle cx="15" cy="15" r="13.4" fill="#fcc21f" stroke="#0c0c0c" stroke-width="1.5"/><path d="M2.6 12A12.8 12.8 0 0 1 27.4 12Q15 7 2.6 12Z" fill="#5ab4f0"/><circle cx="10.2" cy="12.2" r="3.3" fill="#fff"/><circle cx="19.8" cy="12.2" r="3.3" fill="#fff"/><circle cx="10.2" cy="12.2" r="1.5" fill="#3b2508"/><circle cx="19.8" cy="12.2" r="1.5" fill="#3b2508"/><path d="M9.4 24Q9.8 17.6 15 17.6Q20.2 17.6 20.6 24Q15 21.8 9.4 24Z" fill="#3b2508"/></svg><svg class="em" style="left:1502.9px;top:7.5px" width="31" height="31" viewBox="0 0 30 30" role="img" aria-label="😩"><title>😩</title><circle cx="15" cy="15" r="13.4" fill="#fcc21f" stroke="#0c0c0c" stroke-width="1.5"/><path d="M7.4 11.6Q10.2 15 13 11.6M17 11.6Q19.8 15 22.6 11.6" fill="none" stroke="#3b2508" stroke-width="1.6" stroke-linecap="round"/><path d="M9.4 24Q9.8 17.6 15 17.6Q20.2 17.6 20.6 24Q15 21.8 9.4 24Z" fill="#3b2508"/></svg><svg class="em" style="left:1555.9px;top:7.5px" width="31" height="31" viewBox="0 0 30 30" role="img" aria-label="😪"><title>😪</title><circle cx="15" cy="15" r="13.4" fill="#fcc21f" stroke="#0c0c0c" stroke-width="1.5"/><path d="M7.4 11.6Q10.2 15 13 11.6M17 11.6Q19.8 15 22.6 11.6" fill="none" stroke="#3b2508" stroke-width="1.6" stroke-linecap="round"/><path d="M9.6 22.4Q15 17.2 20.4 22.4" fill="none" stroke="#3b2508" stroke-width="1.8" stroke-linecap="round"/><path d="M22.4 17.4Q25.4 21.4 24.8 23.4A2.8 2.8 0 0 1 19.6 23.2Q19.6 21 22.4 17.4Z" fill="#3aa0e8"/></svg><svg class="em" style="left:1608.9px;top:7.5px" width="31" height="31" viewBox="0 0 30 30" role="img" aria-label="😫"><title>😫</title><circle cx="15" cy="15" r="13.4" fill="#fcc21f" stroke="#0c0c0c" stroke-width="1.5"/><path d="M7.4 9.8L12.6 12.4L7.4 15M22.6 9.8L17.4 12.4L22.6 15" fill="none" stroke="#3b2508" stroke-width="1.7" stroke-linecap="round" stroke-linejoin="round"/><path d="M9.4 24Q9.8 17.6 15 17.6Q20.2 17.6 20.6 24Q15 21.8 9.4 24Z" fill="#3b2508"/></svg><svg class="em" style="left:1661.9px;top:7.5px" width="31" height="31" viewBox="0 0 30 30" role="img" aria-label="😬"><title>😬</title><circle cx="15" cy="15" r="13.4" fill="#fcc21f" stroke="#0c0c0c" stroke-width="1.5"/><ellipse cx="10.2" cy="12.2" rx="1.7" ry="2.3" fill="#3b2508"/><ellipse cx="19.8" cy="12.2" rx="1.7" ry="2.3" fill="#3b2508"/><path d="M7.4 16.4H22.6Q22 23.6 15 23.6Q8 23.6 7.4 16.4Z" fill="#fff" stroke="#3b2508" stroke-width="1.3"/><path d="M11.2 16.6V22.8M15 16.6V23.4M18.8 16.6V22.8M7.8 19.8H22.2" stroke="#3b2508" stroke-width="0.9"/></svg><svg class="em" style="left:1714.9px;top:7.5px" width="31" height="31" viewBox="0 0 30 30" role="img" aria-label="😭"><title>😭</title><circle cx="15" cy="15" r="13.4" fill="#fcc21f" stroke="#0c0c0c" stroke-width="1.5"/><path d="M7.6 13.4H12.4V27Q10 29 7.6 27ZM17.6 13.4H22.4V27Q20 29 17.6 27Z" fill="#3aa0e8"/><path d="M7.4 11.6Q10.2 15 13 11.6M17 11.6Q19.8 15 22.6 11.6" fill="none" stroke="#3b2508" stroke-width="1.6" stroke-linecap="round"/><ellipse cx="15" cy="21.4" rx="3.6" ry="4.4" fill="#3b2508"/><ellipse cx="15" cy="23.6" rx="2.2" ry="1.6" fill="#e8543c"/></svg><svg class="em" style="left:1767.9px;top:7.5px" width="31" height="31" viewBox="0 0 30 30" role="img" aria-label="😮"><title>😮</title><circle cx="15" cy="15" r="13.4" fill="#fcc21f" stroke="#0c0c0c" stroke-width="1.5"/><ellipse cx="10.2" cy="12.2" rx="1.7" ry="2.3" fill="#3b2508"/><ellipse cx="19.8" cy="12.2" rx="1.7" ry="2.3" fill="#3b2508"/><ellipse cx="15" cy="21.2" rx="2.9" ry="3.4" fill="#3b2508"/></svg><svg class="em" style="left:1820.9px;top:7.5px" width="31" height="31" viewBox="0 0 30 30" role="img" aria-label="😯"><title>😯</title><circle cx="15" cy="15" r="13.4" fill="#fcc21f" stroke="#0c0c0c" stroke-width="1.5"/><ellipse cx="10.2" cy="12.2" rx="1.7" ry="2.3" fill="#3b2508"/><ellipse cx="19.8" cy="12.2" rx="1.7" ry="2.3" fill="#3b2508"/><ellipse cx="15" cy="21.4" rx="2" ry="2.3" fill="#3b2508"/></svg><svg class="em" style="left:1873.9px;top:7.5px" width="31" height="31" viewBox="0 0 30 30" role="img" aria-label="😰"><title>😰</title><circle cx="15" cy="15" r="13.4" fill="#fcc21f" stroke="#0c0c0c" stroke-width="1.5"/><path d="M2.6 12A12.8 12.8 0 0 1 27.4 12Q15 7 2.6 12Z" fill="#5ab4f0"/><ellipse cx="10.2" cy="12.2" rx="1.7" ry="2.3" fill="#3b2508"/><ellipse cx="19.8" cy="12.2" rx="1.7" ry="2.3" fill="#3b2508"/><path d="M9.4 24Q9.8 17.6 15 17.6Q20.2 17.6 20.6 24Q15 21.8 9.4 24Z" fill="#3b2508"/><path d="M8.4 16.4Q11.4 20.4 10.8 22.4A2.8 2.8 0 0 1 5.6 22.2Q5.6 20 8.4 16.4Z" fill="#3aa0e8"/></svg><svg class="em" style="left:1926.9px;top:7.5px" width="31" height="31" viewBox="0 0 30 30" role="img" aria-label="😱"><title>😱</title><circle cx="15" cy="15" r="13.4" fill="#fcc21f" stroke="#0c0c0c" stroke-width="1.5"/><path d="M2.6 12A12.8 12.8 0 0 1 27.4 12Q15 7 2.6 12Z" fill="#5ab4f0"/><circle cx="10.2" cy="12.2" r="3.3" fill="#fff"/><circle cx="19.8" cy="12.2" r="3.3" fill="#fff"/><circle cx="10.2" cy="12.2" r="1.5" fill="#3b2508"/><circle cx="19.8" cy="12.2" r="1.5" fill="#3b2508"/><ellipse cx="15" cy="21.4" rx="3.6" ry="4.4" fill="#3b2508"/><ellipse cx="15" cy="23.6" rx="2.2" ry="1.6" fill="#e8543c"/><path d="M3 28Q2 18 6.4 17Q9 19 8 28ZM27 28Q28 18 23.6 17Q21 19 22 28Z" fill="#fcc21f" stroke="#0c0c0c" stroke-width="0.8"/></svg><svg class="em" style="left:1979.9px;top:7.5px" width="31" height="31" viewBox="0 0 30 30" role="img" aria-label="😲"><title>😲</title><circle cx="15" cy="15" r="13.4" fill="#fcc21f" stroke="#0c0c0c" stroke-width="1.5"/><circle cx="10.2" cy="12.2" r="3.3" fill="#fff"/><circle cx="19.8" cy="12.2" r="3.3" fill="#fff"/><circle cx="10.2" cy="12.2" r="1.5" fill="#3b2508"/><circle cx="19.8" cy="12.2" r="1.5" fill="#3b2508"/><ellipse cx="15" cy="21.2" rx="2.9" ry="3.4" fill="#3b2508"/></svg><svg class="em" style="left:2032.9px;top:7.5px" width="31" height="31" viewBox="0 0 30 30" role="img" aria-label="😳"><title>😳</title><circle cx="15" cy="15" r="13.4" fill="#fcc21f" stroke="#0c0c0c" stroke-width="1.5"/><ellipse cx="6.6" cy="17.6" rx="2.6" ry="1.9" fill="#f4845c" opacity=".85"/><ellipse cx="23.4" cy="17.6" rx="2.6" ry="1.9" fill="#f4845c" opacity=".85"/><circle cx="10.2" cy="12.2" r="3.3" fill="#fff"/><circle cx="19.8" cy="12.2" r="3.3" fill="#fff"/><circle cx="10.2" cy="12.2" r="1.5" fill="#3b2508"/><circle cx="19.8" cy="12.2" r="1.5" fill="#3b2508"/><path d="M9.6 20.6H20.4" stroke="#3b2508" stroke-width="1.8" stroke-linecap="round"/></svg></div><div style="position:absolute;left:0;top:1047px;width:2100px;height:39px"><span class="t" style="left:433.5px;color:#8c8c8c">[18:48:44]</span><span class="t" style="left:646.8px;color:#40a0c8">-</span><svg class="em" style="left:707.9px;top:7.5px" width="31" height="31" viewBox="0 0 30 30" role="img" aria-label="😴"><title>😴</title><circle cx="15" cy="15" r="13.4" fill="#fcc21f" stroke="#0c0c0c" stroke-width="1.5"/><path d="M7.4 12.4H13M17 12.4H22.6" fill="none" stroke="#3b2508" stroke-width="1.7" stroke-linecap="round"/><ellipse cx="15" cy="21.4" rx="2" ry="2.3" fill="#3b2508"/><path d="M11 6.6H14L11 10H14M16 3.6H19.6L16 7.8H19.6M21.4 0.8H25.4L21.4 5.4H25.4" fill="none" stroke="#2a50d8" stroke-width="1.5" stroke-linejoin="round"/></svg><svg class="em" style="left:760.9px;top:7.5px" width="31" height="31" viewBox="0 0 30 30" role="img" aria-label="😵"><title>😵</title><circle cx="15" cy="15" r="13.4" fill="#fcc21f" stroke="#0c0c0c" stroke-width="1.5"/><circle cx="10.2" cy="12.2" r="2.9" fill="none" stroke="#3b2508" stroke-width="1.2"/><circle cx="19.8" cy="12.2" r="2.9" fill="none" stroke="#3b2508" stroke-width="1.2"/><circle cx="10.2" cy="12.2" r="0.9" fill="#3b2508"/><circle cx="19.8" cy="12.2" r="0.9" fill="#3b2508"/><ellipse cx="15" cy="21.4" rx="2" ry="2.3" fill="#3b2508"/></svg><svg class="em" style="left:813.9px;top:7.5px" width="31" height="31" viewBox="0 0 30 30" role="img" aria-label="😶"><title>😶</title><circle cx="15" cy="15" r="13.4" fill="#fcc21f" stroke="#0c0c0c" stroke-width="1.5"/><ellipse cx="10.2" cy="12.2" rx="1.7" ry="2.3" fill="#3b2508"/><ellipse cx="19.8" cy="12.2" rx="1.7" ry="2.3" fill="#3b2508"/></svg><svg class="em" style="left:866.9px;top:7.5px" width="31" height="31" viewBox="0 0 30 30" role="img" aria-label="😷"><title>😷</title><circle cx="15" cy="15" r="13.4" fill="#fcc21f" stroke="#0c0c0c" stroke-width="1.5"/><path d="M7.4 11.6Q10.2 15 13 11.6M17 11.6Q19.8 15 22.6 11.6" fill="none" stroke="#3b2508" stroke-width="1.6" stroke-linecap="round"/><path d="M7 16.6Q15 14 23 16.6V22Q15 27.6 7 22Z" fill="#f4f4f4" stroke="#d8d8d8" stroke-width="0.8"/><path d="M2 15L7 17.4M28 15L23 17.4M2.6 21L7 21M27.4 21L23 21" stroke="#f4f4f4" stroke-width="1.1"/><path d="M9 19H21M9.6 21.6H20.4" stroke="#d0d0d0" stroke-width="0.8"/><path d="M24.4 2.4Q27.8 6.4 27.2 8.6A2.9 2.9 0 0 1 21.6 8.4Q21.6 6 24.4 2.4Z" fill="#3aa0e8"/></svg><svg class="em" style="left:919.9px;top:7.5px" width="31" height="31" viewBox="0 0 30 30" role="img" aria-label="😸"><title>😸</title><path d="M3.2 1.4L11.6 6.2Q15 5.4 18.4 6.2L26.8 1.4Q28 9 26.6 14.6Q27 22 21.6 26.4Q15 30 8.4 26.4Q3 22 3.4 14.6Q2 9 3.2 1.4Z" fill="#f9a61c" stroke="#0c0c0c" stroke-width="1.3" stroke-linejoin="round"/><path d="M12 6.6V10M15 6V10.4M18 6.6V10M3.8 15.4L7.6 16.4M3.8 19L7.6 18.6M26.2 15.4L22.4 16.4M26.2 19L22.4 18.6" stroke="#c8741c" stroke-width="1.1"/><path d="M8.4 22.4Q9 18.6 15 18.6Q21 18.6 21.6 22.4Q21.6 27.6 15 28.4Q8.4 27.6 8.4 22.4Z" fill="#fff8ec"/><path d="M7.6 14.8Q10 11.6 12.4 14.8M17.6 14.8Q20 11.6 22.4 14.8" fill="none" stroke="#3b2508" stroke-width="1.5" stroke-linecap="round"/><path d="M9.6 20.4H20.4Q20 26.8 15 26.8Q10 26.8 9.6 20.4Z" fill="#3b2508"/><path d="M11.4 25Q15 22.6 18.6 25Q15 27.4 11.4 25Z" fill="#e8543c"/><path d="M13.6 19.4H16.4L15 21Z" fill="#e87a8c"/></svg><svg class="em" style="left:972.9px;top:7.5px" width="31" height="31" viewBox="0 0 30 30" role="img" aria-label="😹"><title>😹</title><path d="M3.2 1.4L11.6 6.2Q15 5.4 18.4 6.2L26.8 1.4Q28 9 26.6 14.6Q27 22 21.6 26.4Q15 30 8.4 26.4Q3 22 3.4 14.6Q2 9 3.2 1.4Z" fill="#f9a61c" stroke="#0c0c0c" stroke-width="1.3" stroke-linejoin="round"/><path d="M12 6.6V10M15 6V10.4M18 6.6V10M3.8 15.4L7.6 16.4M3.8 19L7.6 18.6M26.2 15.4L22.4 16.4M26.2 19L22.4 18.6" stroke="#c8741c" stroke-width="1.1"/><path d="M8.4 22.4Q9 18.6 15 18.6Q21 18.6 21.6 22.4Q21.6 27.6 15 28.4Q8.4 27.6 8.4 22.4Z" fill="#fff8ec"/><path d="M7.6 14.8Q10 11.6 12.4 14.8M17.6 14.8Q20 11.6 22.4 14.8" fill="none" stroke="#3b2508" stroke-width="1.5" stroke-linecap="round"/><path d="M9.6 20.4H20.4Q20 26.8 15 26.8Q10 26.8 9.6 20.4Z" fill="#3b2508"/><path d="M11.4 25Q15 22.6 18.6 25Q15 27.4 11.4 25Z" fill="#e8543c"/><path d="M13.6 19.4H16.4L15 21Z" fill="#e87a8c"/><path d="M1.4 19.4Q3.4 14.6 7.6 15.4Q8.8 20.6 5 22Q2 22.6 1.4 19.4ZM28.6 19.4Q26.6 14.6 22.4 15.4Q21.2 20.6 25 22Q28 22.6 28.6 19.4Z" fill="#3aa0e8"/></svg><svg class="em" style="left:1025.9px;top:7.5px" width="31" height="31" viewBox="0 0 30 30" role="img" aria-label="😺"><title>😺</title><path d="M3.2 1.4L11.6 6.2Q15 5.4 18.4 6.2L26.8 1.4Q28 9 26.6 14.6Q27 22 21.6 26.4Q15 30 8.4 26.4Q3 22 3.4 14.6Q2 9 3.2 1.4Z" fill="#f9a61c" stroke="#0c0c0c" stroke-width="1.3" stroke-linejoin="round"/><path d="M12 6.6V10M15 6V10.4M18 6.6V10M3.8 15.4L7.6 16.4M3.8 19L7.6 18.6M26.2 15.4L22.4 16.4M26.2 19L22.4 18.6" stroke="#c8741c" stroke-width="1.1"/><path d="M8.4 22.4Q9 18.6 15 18.6Q21 18.6 21.6 22.4Q21.6 27.6 15 28.4Q8.4 27.6 8.4 22.4Z" fill="#fff8ec"/><ellipse cx="10" cy="14" rx="1.5" ry="2" fill="#3b2508"/><ellipse cx="20" cy="14" rx="1.5" ry="2" fill="#3b2508"/><path d="M9.6 20.4H20.4Q20 26.8 15 26.8Q10 26.8 9.6 20.4Z" fill="#3b2508"/><path d="M11.4 25Q15 22.6 18.6 25Q15 27.4 11.4 25Z" fill="#e8543c"/><path d="M13.6 19.4H16.4L15 21Z" fill="#e87a8c"/></svg><svg class="em" style="left:1078.9px;top:7.5px" width="31" height="31" viewBox="0 0 30 30" role="img" aria-label="😻"><title>😻</title><path d="M3.2 1.4L11.6 6.2Q15 5.4 18.4 6.2L26.8 1.4Q28 9 26.6 14.6Q27 22 21.6 26.4Q15 30 8.4 26.4Q3 22 3.4 14.6Q2 9 3.2 1.4Z" fill="#f9a61c" stroke="#0c0c0c" stroke-width="1.3" stroke-linejoin="round"/><path d="M12 6.6V10M15 6V10.4M18 6.6V10M3.8 15.4L7.6 16.4M3.8 19L7.6 18.6M26.2 15.4L22.4 16.4M26.2 19L22.4 18.6" stroke="#c8741c" stroke-width="1.1"/><path d="M8.4 22.4Q9 18.6 15 18.6Q21 18.6 21.6 22.4Q21.6 27.6 15 28.4Q8.4 27.6 8.4 22.4Z" fill="#fff8ec"/><path d="M9.6 17.4L5.8 13.4A2.1 2.1 0 0 1 9.6 11.6A2.1 2.1 0 0 1 13.4 13.4ZM20.4 17.4L16.6 13.4A2.1 2.1 0 0 1 20.4 11.6A2.1 2.1 0 0 1 24.2 13.4Z" fill="#e8261e"/><path d="M9.6 20.4H20.4Q20 26.8 15 26.8Q10 26.8 9.6 20.4Z" fill="#3b2508"/><path d="M11.4 25Q15 22.6 18.6 25Q15 27.4 11.4 25Z" fill="#e8543c"/><path d="M13.6 19.4H16.4L15 21Z" fill="#e87a8c"/></svg><svg class="em" style="left:1131.9px;top:7.5px" width="31" height="31" viewBox="0 0 30 30" role="img" aria-label="😼"><title>😼</title><path d="M3.2 1.4L11.6 6.2Q15 5.4 18.4 6.2L26.8 1.4Q28 9 26.6 14.6Q27 22 21.6 26.4Q15 30 8.4 26.4Q3 22 3.4 14.6Q2 9 3.2 1.4Z" fill="#f9a61c" stroke="#0c0c0c" stroke-width="1.3" stroke-linejoin="round"/><path d="M12 6.6V10M15 6V10.4M18 6.6V10M3.8 15.4L7.6 16.4M3.8 19L7.6 18.6M26.2 15.4L22.4 16.4M26.2 19L22.4 18.6" stroke="#c8741c" stroke-width="1.1"/><path d="M8.4 22.4Q9 18.6 15 18.6Q21 18.6 21.6 22.4Q21.6 27.6 15 28.4Q8.4 27.6 8.4 22.4Z" fill="#fff8ec"/><path d="M7 11.6L12.4 14.4M23 11.6L17.6 14.4" stroke="#3b2508" stroke-width="1.5" stroke-linecap="round"/><circle cx="10.4" cy="15.6" r="1.4" fill="#3b2508"/><circle cx="19.6" cy="15.6" r="1.4" fill="#3b2508"/><path d="M13.6 19.4H16.4L15 21Z" fill="#e87a8c"/><path d="M10.6 22.6Q15 26.4 19.4 22.6" fill="none" stroke="#3b2508" stroke-width="1.4" stroke-linecap="round"/></svg><svg class="em" style="left:1184.9px;top:7.5px" width="31" height="31" viewBox="0 0 30 30" role="img" aria-label="😽"><title>😽</title><path d="M3.2 1.4L11.6 6.2Q15 5.4 18.4 6.2L26.8 1.4Q28 9 26.6 14.6Q27 22 21.6 26.4Q15 30 8.4 26.4Q3 22 3.4 14.6Q2 9 3.2 1.4Z" fill="#f9a61c" stroke="#0c0c0c" stroke-width="1.3" stroke-linejoin="round"/><path d="M12 6.6V10M15 6V10.4M18 6.6V10M3.8 15.4L7.6 16.4M3.8 19L7.6 18.6M26.2 15.4L22.4 16.4M26.2 19L22.4 18.6" stroke="#c8741c" stroke-width="1.1"/><path d="M8.4 22.4Q9 18.6 15 18.6Q21 18.6 21.6 22.4Q21.6 27.6 15 28.4Q8.4 27.6 8.4 22.4Z" fill="#fff8ec"/><path d="M7.6 13.4Q10 16 12.4 13.4M17.6 13.4Q20 16 22.4 13.4" fill="none" stroke="#3b2508" stroke-width="1.4" stroke-linecap="round"/><path d="M13.6 19.4H16.4L15 21Z" fill="#e87a8c"/><path d="M14.4 22Q16.8 22.8 15 24Q16.8 25 14.4 26" fill="none" stroke="#3b2508" stroke-width="1.2" stroke-linecap="round"/></svg><svg class="em" style="left:1237.9px;top:7.5px" width="31" height="31" viewBox="0 0 30 30" role="img" aria-label="😾"><title>😾</title><path d="M3.2 1.4L11.6 6.2Q15 5.4 18.4 6.2L26.8 1.4Q28 9 26.6 14.6Q27 22 21.6 26.4Q15 30 8.4 26.4Q3 22 3.4 14.6Q2 9 3.2 1.4Z" fill="#f9a61c" stroke="#0c0c0c" stroke-width="1.3" stroke-linejoin="round"/><path d="M12 6.6V10M15 6V10.4M18 6.6V10M3.8 15.4L7.6 16.4M3.8 19L7.6 18.6M26.2 15.4L22.4 16.4M26.2 19L22.4 18.6" stroke="#c8741c" stroke-width="1.1"/><path d="M8.4 22.4Q9 18.6 15 18.6Q21 18.6 21.6 22.4Q21.6 27.6 15 28.4Q8.4 27.6 8.4 22.4Z" fill="#fff8ec"/><path d="M7 11.6L12.4 14.4M23 11.6L17.6 14.4" stroke="#3b2508" stroke-width="1.5" stroke-linecap="round"/><circle cx="10.4" cy="15.6" r="1.4" fill="#3b2508"/><circle cx="19.6" cy="15.6" r="1.4" fill="#3b2508"/><path d="M13.6 19.4H16.4L15 21Z" fill="#e87a8c"/><path d="M11.4 25.6Q15 22 18.6 25.6" fill="none" stroke="#3b2508" stroke-width="1.4" stroke-linecap="round"/></svg><svg class="em" style="left:1290.9px;top:7.5px" width="31" height="31" viewBox="0 0 30 30" role="img" aria-label="😿"><title>😿</title><path d="M3.2 1.4L11.6 6.2Q15 5.4 18.4 6.2L26.8 1.4Q28 9 26.6 14.6Q27 22 21.6 26.4Q15 30 8.4 26.4Q3 22 3.4 14.6Q2 9 3.2 1.4Z" fill="#f9a61c" stroke="#0c0c0c" stroke-width="1.3" stroke-linejoin="round"/><path d="M12 6.6V10M15 6V10.4M18 6.6V10M3.8 15.4L7.6 16.4M3.8 19L7.6 18.6M26.2 15.4L22.4 16.4M26.2 19L22.4 18.6" stroke="#c8741c" stroke-width="1.1"/><path d="M8.4 22.4Q9 18.6 15 18.6Q21 18.6 21.6 22.4Q21.6 27.6 15 28.4Q8.4 27.6 8.4 22.4Z" fill="#fff8ec"/><path d="M7.6 13.4Q10 16 12.4 13.4M17.6 13.4Q20 16 22.4 13.4" fill="none" stroke="#3b2508" stroke-width="1.4" stroke-linecap="round"/><path d="M13.6 19.4H16.4L15 21Z" fill="#e87a8c"/><path d="M11.4 25.6Q15 22 18.6 25.6" fill="none" stroke="#3b2508" stroke-width="1.4" stroke-linecap="round"/><path d="M8.4 16.4Q11.4 20.4 10.8 22.4A2.8 2.8 0 0 1 5.6 22.2Q5.6 20 8.4 16.4Z" fill="#3aa0e8"/></svg><svg class="em" style="left:1343.9px;top:7.5px" width="31" height="31" viewBox="0 0 30 30" role="img" aria-label="🙀"><title>🙀</title><path d="M3.2 1.4L11.6 6.2Q15 5.4 18.4 6.2L26.8 1.4Q28 9 26.6 14.6Q27 22 21.6 26.4Q15 30 8.4 26.4Q3 22 3.4 14.6Q2 9 3.2 1.4Z" fill="#f9a61c" stroke="#0c0c0c" stroke-width="1.3" stroke-linejoin="round"/><path d="M12 6.6V10M15 6V10.4M18 6.6V10M3.8 15.4L7.6 16.4M3.8 19L7.6 18.6M26.2 15.4L22.4 16.4M26.2 19L22.4 18.6" stroke="#c8741c" stroke-width="1.1"/><path d="M8.4 22.4Q9 18.6 15 18.6Q21 18.6 21.6 22.4Q21.6 27.6 15 28.4Q8.4 27.6 8.4 22.4Z" fill="#fff8ec"/><circle cx="10" cy="13.6" r="2.8" fill="#fff"/><circle cx="20" cy="13.6" r="2.8" fill="#fff"/><circle cx="10" cy="13.6" r="1.2" fill="#3b2508"/><circle cx="20" cy="13.6" r="1.2" fill="#3b2508"/><ellipse cx="15" cy="23.4" rx="3" ry="4.2" fill="#3b2508"/><ellipse cx="15" cy="25.6" rx="1.8" ry="1.5" fill="#e8543c"/></svg><svg class="em" style="left:1396.9px;top:7.5px" width="31" height="31" viewBox="0 0 30 30" role="img" aria-label="🙁"><title>🙁</title><circle cx="15" cy="15" r="13.4" fill="#fcc21f" stroke="#0c0c0c" stroke-width="1.5"/><ellipse cx="10.2" cy="12.2" rx="1.7" ry="2.3" fill="#3b2508"/><ellipse cx="19.8" cy="12.2" rx="1.7" ry="2.3" fill="#3b2508"/><path d="M9.6 22.4Q15 17.2 20.4 22.4" fill="none" stroke="#3b2508" stroke-width="1.8" stroke-linecap="round"/></svg><svg class="em" style="left:1449.9px;top:7.5px" width="31" height="31" viewBox="0 0 30 30" role="img" aria-label="🙂"><title>🙂</title><circle cx="15" cy="15" r="13.4" fill="#fcc21f" stroke="#0c0c0c" stroke-width="1.5"/><ellipse cx="10.2" cy="12.2" rx="1.7" ry="2.3" fill="#3b2508"/><ellipse cx="19.8" cy="12.2" rx="1.7" ry="2.3" fill="#3b2508"/><path d="M10 19Q15 23.4 20 19" fill="none" stroke="#3b2508" stroke-width="1.7" stroke-linecap="round"/></svg><svg class="em" style="left:1502.9px;top:7.5px" width="31" height="31" viewBox="0 0 30 30" role="img" aria-label="🙃"><title>🙃</title><g transform="rotate(180 15 15)"><circle cx="15" cy="15" r="13.4" fill="#fcc21f" stroke="#0c0c0c" stroke-width="1.5"/><ellipse cx="10.2" cy="12.2" rx="1.7" ry="2.3" fill="#3b2508"/><ellipse cx="19.8" cy="12.2" rx="1.7" ry="2.3" fill="#3b2508"/><path d="M10 19Q15 23.4 20 19" fill="none" stroke="#3b2508" stroke-width="1.7" stroke-linecap="round"/></g></svg><svg class="em" style="left:1555.9px;top:7.5px" width="31" height="31" viewBox="0 0 30 30" role="img" aria-label="🙄"><title>🙄</title><circle cx="15" cy="15" r="13.4" fill="#fcc21f" stroke="#0c0c0c" stroke-width="1.5"/><circle cx="10.2" cy="11.2" r="3.5" fill="#fff"/><circle cx="19.8" cy="11.2" r="3.5" fill="#fff"/><circle cx="11.0" cy="9.6" r="1.5" fill="#3b2508"/><circle cx="20.6" cy="9.6" r="1.5" fill="#3b2508"/><path d="M9.6 20.6H20.4" stroke="#3b2508" stroke-width="1.8" stroke-linecap="round"/></svg><svg class="em" style="left:1608.9px;top:7.5px" width="31" height="31" viewBox="0 0 30 30" role="img" aria-label="🙅"><title>🙅</title><path d="M5 29Q6 20.6 15 20.6Q24 20.6 25 29Z" fill="#9a78dc"/><path d="M8 3.6Q15 -1 22 3.6Q24.6 10 22.6 16H7.4Q5.4 10 8 3.6Z" fill="#a8642c"/><circle cx="15" cy="11" r="6" fill="#f4bc8c"/><path d="M5.4 18L22 27.6M24.6 18L8 27.6" stroke="#b89ae8" stroke-width="3.4" stroke-linecap="round"/></svg><svg class="em" style="left:1661.9px;top:7.5px" width="31" height="31" viewBox="0 0 30 30" role="img" aria-label="🙆"><title>🙆</title><path d="M7.4 29Q8 21.6 15 21.6Q22 21.6 22.6 29Z" fill="#9a78dc"/><path d="M9.4 21.6Q1.6 12 9.6 3.6Q15 1 20.4 3.6Q28.4 12 20.6 21.6L18 19.6Q23.6 12 18.4 7H11.6Q6.4 12 12 19.6Z" fill="#9a78dc"/><path d="M9 8Q15 3.6 21 8Q22.6 13 21 18H9Q7.4 13 9 8Z" fill="#a8642c"/><circle cx="15" cy="14" r="5.4" fill="#f4bc8c"/></svg><svg class="em" style="left:1714.9px;top:7.5px" width="31" height="31" viewBox="0 0 30 30" role="img" aria-label="🙇"><title>🙇</title><path d="M2.6 29Q5 20 15 20Q25 20 27.4 29Z" fill="#3a90d8"/><path d="M9 12.6Q15 7.4 21 12.6Q22 18 20 21.6H10Q8 18 9 12.6Z" fill="#6a3c1c"/><circle cx="15" cy="18.4" r="5.2" fill="#f4bc8c"/><path d="M9.6 8.4L8 5.4M15 7.2V3.6M20.4 8.4L22 5.4" stroke="#5ab4f0" stroke-width="1.5" stroke-linecap="round"/></svg><svg class="em" style="left:1767.9px;top:7.5px" width="31" height="31" viewBox="0 0 30 30" role="img" aria-label="🙈"><title>🙈</title><circle cx="4.6" cy="13" r="3.8" fill="#8a5a3c"/><circle cx="25.4" cy="13" r="3.8" fill="#8a5a3c"/><circle cx="4.6" cy="13" r="1.9" fill="#f0b49c"/><circle cx="25.4" cy="13" r="1.9" fill="#f0b49c"/><ellipse cx="15" cy="13.6" rx="11" ry="11.6" fill="#8a5a3c"/><path d="M7.4 12.6Q7.4 6.6 11.6 7.2Q15 9 18.4 7.2Q22.6 6.6 22.6 12.6Q24 22.6 15 23.4Q6 22.6 7.4 12.6Z" fill="#f0b49c"/><path d="M11.4 19.4Q15 23 18.6 19.4Q15 20.6 11.4 19.4Z" fill="#3b1c0c"/><ellipse cx="9.6" cy="12.4" rx="5" ry="3.8" fill="#8a5a3c" stroke="#5a3820" stroke-width="0.7"/><ellipse cx="20.4" cy="12.4" rx="5" ry="3.8" fill="#8a5a3c" stroke="#5a3820" stroke-width="0.7"/><path d="M4 29Q6 23.6 15 23.6Q24 23.6 26 29Z" fill="#8a5a3c"/></svg><svg class="em" style="left:1820.9px;top:7.5px" width="31" height="31" viewBox="0 0 30 30" role="img" aria-label="🙉"><title>🙉</title><circle cx="4.6" cy="13" r="3.8" fill="#8a5a3c"/><circle cx="25.4" cy="13" r="3.8" fill="#8a5a3c"/><circle cx="4.6" cy="13" r="1.9" fill="#f0b49c"/><circle cx="25.4" cy="13" r="1.9" fill="#f0b49c"/><ellipse cx="15" cy="13.6" rx="11" ry="11.6" fill="#8a5a3c"/><path d="M7.4 12.6Q7.4 6.6 11.6 7.2Q15 9 18.4 7.2Q22.6 6.6 22.6 12.6Q24 22.6 15 23.4Q6 22.6 7.4 12.6Z" fill="#f0b49c"/><circle cx="11.4" cy="12" r="1.4" fill="#3b1c0c"/><circle cx="18.6" cy="12" r="1.4" fill="#3b1c0c"/><ellipse cx="15" cy="19.4" rx="2.6" ry="3" fill="#3b1c0c"/><ellipse cx="4.4" cy="15" rx="3.8" ry="6.4" fill="#8a5a3c" stroke="#5a3820" stroke-width="0.7"/><ellipse cx="25.6" cy="15" rx="3.8" ry="6.4" fill="#8a5a3c" stroke="#5a3820" stroke-width="0.7"/><path d="M4 29Q6 23.6 15 23.6Q24 23.6 26 29Z" fill="#8a5a3c"/></svg><svg class="em" style="left:1873.9px;top:7.5px" width="31" height="31" viewBox="0 0 30 30" role="img" aria-label="🙊"><title>🙊</title><circle cx="4.6" cy="13" r="3.8" fill="#8a5a3c"/><circle cx="25.4" cy="13" r="3.8" fill="#8a5a3c"/><circle cx="4.6" cy="13" r="1.9" fill="#f0b49c"/><circle cx="25.4" cy="13" r="1.9" fill="#f0b49c"/><ellipse cx="15" cy="13.6" rx="11" ry="11.6" fill="#8a5a3c"/><path d="M7.4 12.6Q7.4 6.6 11.6 7.2Q15 9 18.4 7.2Q22.6 6.6 22.6 12.6Q24 22.6 15 23.4Q6 22.6 7.4 12.6Z" fill="#f0b49c"/><circle cx="11.4" cy="12" r="1.4" fill="#3b1c0c"/><circle cx="18.6" cy="12" r="1.4" fill="#3b1c0c"/><ellipse cx="11.4" cy="20.6" rx="5" ry="3.6" fill="#8a5a3c" stroke="#5a3820" stroke-width="0.7"/><ellipse cx="18.6" cy="20.6" rx="5" ry="3.6" fill="#8a5a3c" stroke="#5a3820" stroke-width="0.7"/><path d="M4 29Q6 23.6 15 23.6Q24 23.6 26 29Z" fill="#8a5a3c"/></svg><svg class="em" style="left:1926.9px;top:7.5px" width="31" height="31" viewBox="0 0 30 30" role="img" aria-label="🙋"><title>🙋</title><path d="M5.6 29Q6.6 21 15.6 21Q24.6 21 25.6 29Z" fill="#9a78dc"/><path d="M3.6 3Q6 1.6 7.6 3.6L8.6 22L4.6 23Z" fill="#9a78dc"/><circle cx="5.4" cy="3.4" r="2.4" fill="#f4bc8c"/><path d="M9.6 6.6Q16 2 22.4 6.6Q25 13 23 19H9Q7 13 9.6 6.6Z" fill="#a8642c"/><circle cx="16" cy="13.6" r="5.8" fill="#f4bc8c"/></svg><svg class="em" style="left:1979.9px;top:7.5px" width="31" height="31" viewBox="0 0 30 30" role="img" aria-label="🙌"><title>🙌</title><path d="M4.6 28Q2.6 17 5.6 10Q7 8 8 10L8.6 6.6Q10 5 11 6.6L11.6 11Q13.6 12 13 17Q13.6 24 11.6 28ZM25.4 28Q27.4 17 24.4 10Q23 8 22 10L21.4 6.6Q20 5 19 6.6L18.4 11Q16.4 12 17 17Q16.4 24 18.4 28Z" fill="#fcc21f" stroke="#0c0c0c" stroke-width="1"/><path d="M11 3.6L12 1M15 3V0.4M19 3.6L18 1" stroke="#e8741c" stroke-width="1.5" stroke-linecap="round"/></svg><svg class="em" style="left:2032.9px;top:7.5px" width="31" height="31" viewBox="0 0 30 30" role="img" aria-label="🙍"><title>🙍</title><path d="M5 29Q6 21 15 21Q24 21 25 29Z" fill="#9a78dc"/><path d="M8 5.6Q15 0.6 22 5.6Q24.6 13 22.6 20H7.4Q5.4 13 8 5.6Z" fill="#a8642c"/><circle cx="15" cy="12.6" r="6" fill="#f4bc8c"/><path d="M12.6 15.8Q15 14.2 17.4 15.8" fill="none" stroke="#6a3c1c" stroke-width="1" stroke-linecap="round"/></svg></div><svg style="position:absolute;left:2083px;top:898px" width="18" height="28" viewBox="0 0 18 28"><path d="M2 3.5H15.5V17H3M9 10.5L2.5 17L9 23.5" fill="none" stroke="#2c8aa8" stroke-width="1.6"/></svg><svg style="position:absolute;left:2083px;top:976px" width="18" height="28" viewBox="0 0 18 28"><path d="M2 3.5H15.5V17H3M9 10.5L2.5 17L9 23.5" fill="none" stroke="#2c8aa8" stroke-width="1.6"/></svg><svg style="position:absolute;left:2083px;top:1015px" width="18" height="28" viewBox="0 0 18 28"><path d="M2 3.5H15.5V17H3M9 10.5L2.5 17L9 23.5" fill="none" stroke="#2c8aa8" stroke-width="1.6"/></svg><div style="position:absolute;left:703px;top:1086px;width:224px;height:39px;background:#323232"></div><div style="position:absolute;left:927px;top:1086px;width:64px;height:39px;background:#6c80d2"></div><div style="position:absolute;left:0;top:1086px;width:2100px;height:39px"><span class="t" style="left:433.5px;color:#8c8c8c">[18:48:47]</span><span class="t" style="left:630.8px;color:#40a0c8">43</span><span class="t" style="left:719px;color:#fff">king@MACBOOK</span><svg style="position:absolute;left:927px;top:0" width="16" height="39" viewBox="0 0 16 39"><path d="M0 0L13.5 19.5L0 39Z" fill="#323232"/></svg><span class="t" style="left:959px;color:#343a58;top:1.7px">~</span><svg style="position:absolute;left:991px;top:0" width="16" height="39" viewBox="0 0 16 39"><path d="M0 0L13.5 19.5L0 39Z" fill="#6c80d2"/></svg><span class="t" style="left:1023px;color:#5ad4e6">cd</span><span class="t" style="left:1071px;color:#e6d86e">git-test/</span></div><div style="position:absolute;left:703px;top:1125px;width:224px;height:39px;background:#3c3d4c"></div><div style="position:absolute;left:927px;top:1125px;width:208px;height:39px;background:#6c80d2"></div><div style="position:absolute;left:1135px;top:1125px;width:219px;height:39px;background:#c9a227"></div><div style="position:absolute;left:0;top:1125px;width:2100px;height:39px"><span class="t" style="left:433.5px;color:#ff1a8c">[18:48:47]</span><span class="t" style="left:630.8px;color:#ff1a8c">44</span><span class="t" style="left:719px;color:#fff">king@MACBOOK</span><svg style="position:absolute;left:927px;top:0" width="16" height="39" viewBox="0 0 16 39"><path d="M0 0L13.5 19.5L0 39Z" fill="#3c3d4c"/></svg><span class="t" style="left:959px;color:#343a58;top:1.7px">~</span><span class="t" style="left:975px;color:#343a58">/git-test</span><svg style="position:absolute;left:1135px;top:0" width="16" height="39" viewBox="0 0 16 39"><path d="M0 0L13.5 19.5L0 39Z" fill="#6c80d2"/></svg><svg style="position:absolute;left:1167px;top:0" width="22" height="39" viewBox="0 0 22 39"><path d="M3.4 6V26.8M3.4 35.2V32C3.4 23.5 13.8 26 13.8 13.6M7.8 18L13.8 12.2L19.6 18" fill="none" stroke="#3a3a34" stroke-width="2"/></svg><span class="t" style="left:1199px;color:#3a3a34">master</span><span class="t sy" style="left:1311px;color:#3a3a34;font-size:26px">✚</span><svg style="position:absolute;left:1354px;top:0" width="16" height="39" viewBox="0 0 16 39"><path d="M0 0L13.5 19.5L0 39Z" fill="#c9a227"/></svg><div style="position:absolute;left:1386px;top:0;width:16px;height:39px;background:#ffa500"></div></div><div style="position:absolute;left:676px;top:255px;width:10px;height:345px;border-left:2px solid #6e6e6e;border-bottom:2px solid #6e6e6e"></div><svg style="position:absolute;left:667.9px;top:237.9px" width="18.2" height="18.2" viewBox="0 0 18.2 18.2"><rect x="1" y="1" width="16.2" height="16.2" rx="1.6" fill="#1d1d1d" stroke="#7c7c7c" stroke-width="2"/><path d="M3.4 9.4H15.6" stroke="#a0a0a0" stroke-width="1.5"/></svg><div style="position:absolute;left:676px;top:645px;width:10px;height:150px;border-left:2px solid #6e6e6e;border-bottom:2px solid #6e6e6e"></div><svg style="position:absolute;left:667.9px;top:627.9px" width="18.2" height="18.2" viewBox="0 0 18.2 18.2"><rect x="1" y="1" width="16.2" height="16.2" rx="1.6" fill="#1d1d1d" stroke="#7c7c7c" stroke-width="2"/><path d="M3.4 9.4H15.6" stroke="#a0a0a0" stroke-width="1.5"/></svg><div style="position:absolute;left:676px;top:840px;width:10px;height:33px;border-left:2px solid #6e6e6e;border-bottom:2px solid #6e6e6e"></div><svg style="position:absolute;left:667.9px;top:822.9px" width="18.2" height="18.2" viewBox="0 0 18.2 18.2"><rect x="1" y="1" width="16.2" height="16.2" rx="1.6" fill="#1d1d1d" stroke="#7c7c7c" stroke-width="2"/><path d="M3.4 9.4H15.6" stroke="#a0a0a0" stroke-width="1.5"/></svg><div style="position:absolute;left:676px;top:957px;width:10px;height:111px;border-left:2px solid #6e6e6e;border-bottom:2px solid #6e6e6e"></div><svg style="position:absolute;left:667.9px;top:939.9px" width="18.2" height="18.2" viewBox="0 0 18.2 18.2"><rect x="1" y="1" width="16.2" height="16.2" rx="1.6" fill="#1d1d1d" stroke="#7c7c7c" stroke-width="2"/><path d="M3.4 9.4H15.6" stroke="#a0a0a0" stroke-width="1.5"/></svg><div style="position:absolute;left:2156px;top:126px;width:11.8px;height:11.8px;background:#2196f3;"></div><div style="position:absolute;left:2181.8px;top:114.8px;height:40px;line-height:40px;font-size:23.333px;color:#d4d4d4;white-space:pre;">Session</div><svg style="position:absolute;left:0;top:0;overflow:visible" width="1" height="1"><circle cx="2507" cy="132.5" r="5.5" fill="none" stroke="#adadad" stroke-width="1.7"/><path d="M2512.80 132.50L2517.10 132.50M2511.10 136.60L2514.14 139.64M2507.00 138.30L2507.00 142.60M2502.90 136.60L2499.86 139.64M2501.20 132.50L2496.90 132.50M2502.90 128.40L2499.86 125.36M2507.00 126.70L2507.00 122.40M2511.10 128.40L2514.14 125.36" stroke="#adadad" stroke-width="2.2" fill="none"/></svg><svg style="position:absolute;left:0;top:0;overflow:visible" width="1" height="1"><path d="M2535.5 126.0L2548.5 139.0M2548.5 126.0L2535.5 139.0" stroke="#adadad" stroke-width="2" fill="none"/></svg><div style="position:absolute;left:2151.0px;top:171.8px;height:40px;line-height:40px;font-size:23.333px;color:#858585;white-space:pre;font-style:italic;">Filter</div><div style="position:absolute;left:2146px;top:208px;width:402px;height:1px;background:#4a4a4a;"></div><div style="position:absolute;left:2134px;top:267px;width:426px;height:46px;background:#282828;"></div><svg style="position:absolute;left:2146px;top:239.4px" width="17" height="10" viewBox="0 0 17 10"><path d="M0.3 0.5H16.7L8.5 9.6Z" fill="#808080"/></svg><svg style="position:absolute;left:2178.5px;top:232.0px" width="20" height="28" viewBox="0 0 20 28"><path d="M6 0.6H16.2V12.6L18.6 15.4V23.6H6Z" fill="#efcf66"/><path d="M0 0L6.2 2.8V27.2L0 23.2Z" fill="#fbe7a2"/></svg><div style="position:absolute;left:2212.0px;top:227.2px;height:40px;line-height:40px;font-size:23.333px;color:#d4d4d4;white-space:pre;">Putty sessions</div><div style="position:absolute;left:2220.7px;top:282.09999999999997px;width:18.6px;height:18.6px;border-radius:50%;background:#ff1a9c"></div><div style="position:absolute;left:2252.6px;top:273.2px;height:40px;line-height:40px;font-size:23.333px;color:#d4d4d4;white-space:pre;">Local SSH</div><div style="position:absolute;left:2222px;top:329.2px;width:16px;height:16px;background:#2b8dff;"></div><div style="position:absolute;left:2252.6px;top:319.2px;height:40px;line-height:40px;font-size:23.333px;color:#d4d4d4;white-space:pre;">Local Telnet</div><svg style="position:absolute;left:2146px;top:377.4px" width="17" height="10" viewBox="0 0 17 10"><path d="M0.3 0.5H16.7L8.5 9.6Z" fill="#808080"/></svg><svg style="position:absolute;left:2178.5px;top:370.0px" width="20" height="28" viewBox="0 0 20 28"><path d="M6 0.6H16.2V12.6L18.6 15.4V23.6H6Z" fill="#efcf66"/><path d="M0 0L6.2 2.8V27.2L0 23.2Z" fill="#fbe7a2"/></svg><div style="position:absolute;left:2212.0px;top:365.2px;height:40px;line-height:40px;font-size:23.333px;color:#d4d4d4;white-space:pre;">Shell sessions</div><svg style="position:absolute;left:2215px;top:419.9px" width="30" height="20" viewBox="0 0 30 20"><rect x="0.7" y="0.7" width="28.6" height="18.6" fill="#3c3c3c" stroke="#c9d2c4" stroke-width="1.4"/><text x="3.6" y="13.6" font-family="'Liberation Sans',sans-serif" font-weight="bold" font-size="10.5" fill="#fff" textLength="15" lengthAdjust="spacingAndGlyphs">C:\</text><path d="M19.5 14.2H26" stroke="#fff" stroke-width="1.6"/></svg><div style="position:absolute;left:2252.6px;top:411.2px;height:40px;line-height:40px;font-size:23.333px;color:#d4d4d4;white-space:pre;">admin:cmd</div><svg style="position:absolute;left:2214.5px;top:465.79999999999995px" width="31" height="20" viewBox="0 0 31 20"><path d="M6.2 0.4H30.6L25.2 19.6H0.6Z" fill="#1c76c8"/><path d="M10 4.2L18.2 10L8 16.2" fill="none" stroke="#fff" stroke-width="2.5" stroke-linejoin="miter"/><path d="M15.5 16H22.5" stroke="#fff" stroke-width="2"/></svg><div style="position:absolute;left:2252.6px;top:457.2px;height:40px;line-height:40px;font-size:23.333px;color:#d4d4d4;white-space:pre;">admin:powershell</div><svg style="position:absolute;left:2214.5px;top:511.79999999999995px" width="31" height="20" viewBox="0 0 31 20"><path d="M6.2 0.4H30.6L25.2 19.6H0.6Z" fill="#1c76c8"/><path d="M10 4.2L18.2 10L8 16.2" fill="none" stroke="#fff" stroke-width="2.5" stroke-linejoin="miter"/><path d="M15.5 16H22.5" stroke="#fff" stroke-width="2"/></svg><div style="position:absolute;left:2252.6px;top:503.2px;height:40px;line-height:40px;font-size:23.333px;color:#d4d4d4;white-space:pre;">admin:powershell 6|7</div><svg style="position:absolute;left:2215px;top:557.9px" width="30" height="20" viewBox="0 0 30 20"><rect x="0.7" y="0.7" width="28.6" height="18.6" fill="#3c3c3c" stroke="#c9d2c4" stroke-width="1.4"/><text x="3.6" y="13.6" font-family="'Liberation Sans',sans-serif" font-weight="bold" font-size="10.5" fill="#fff" textLength="15" lengthAdjust="spacingAndGlyphs">C:\</text><path d="M19.5 14.2H26" stroke="#fff" stroke-width="1.6"/></svg><div style="position:absolute;left:2252.6px;top:549.2px;height:40px;line-height:40px;font-size:23.333px;color:#d4d4d4;white-space:pre;">cmd</div><svg style="position:absolute;left:2214.5px;top:603.8px" width="31" height="20" viewBox="0 0 31 20"><path d="M6.2 0.4H30.6L25.2 19.6H0.6Z" fill="#1c76c8"/><path d="M10 4.2L18.2 10L8 16.2" fill="none" stroke="#fff" stroke-width="2.5" stroke-linejoin="miter"/><path d="M15.5 16H22.5" stroke="#fff" stroke-width="2"/></svg><div style="position:absolute;left:2252.6px;top:595.2px;height:40px;line-height:40px;font-size:23.333px;color:#d4d4d4;white-space:pre;">powershell</div><svg style="position:absolute;left:2214.5px;top:649.8px" width="31" height="20" viewBox="0 0 31 20"><path d="M6.2 0.4H30.6L25.2 19.6H0.6Z" fill="#1c76c8"/><path d="M10 4.2L18.2 10L8 16.2" fill="none" stroke="#fff" stroke-width="2.5" stroke-linejoin="miter"/><path d="M15.5 16H22.5" stroke="#fff" stroke-width="2"/></svg><div style="position:absolute;left:2252.6px;top:641.2px;height:40px;line-height:40px;font-size:23.333px;color:#d4d4d4;white-space:pre;">powershell 6|7</div><svg style="position:absolute;left:2215px;top:690.4px" width="30" height="30" viewBox="-14.5 -14.5 29 29"><circle cx="0" cy="0" r="14.5" fill="#dd4a1c"/><circle cx="0" cy="0" r="6.2" fill="none" stroke="#fff" stroke-width="3"/><circle cx="-9.60" cy="0.00" r="3.3" fill="#dd4a1c"/><circle cx="-9.60" cy="0.00" r="2.2" fill="#fff"/><circle cx="4.80" cy="8.31" r="3.3" fill="#dd4a1c"/><circle cx="4.80" cy="8.31" r="2.2" fill="#fff"/><circle cx="4.80" cy="-8.31" r="3.3" fill="#dd4a1c"/><circle cx="4.80" cy="-8.31" r="2.2" fill="#fff"/><path d="M4.00 0.00L9.00 0.00" stroke="#dd4a1c" stroke-width="1.6"/><path d="M-2.00 3.46L-4.50 7.79" stroke="#dd4a1c" stroke-width="1.6"/><path d="M-2.00 -3.46L-4.50 -7.79" stroke="#dd4a1c" stroke-width="1.6"/></svg><div style="position:absolute;left:2252.6px;top:687.2px;height:40px;line-height:40px;font-size:23.333px;color:#d4d4d4;white-space:pre;">Ubuntu</div><div style="position:absolute;left:2134px;top:747px;width:426px;height:1px;background:#434343;"></div><div style="position:absolute;left:2157px;top:765.5px;width:11.5px;height:11.5px;background:#9fdcf8;"></div><div style="position:absolute;left:2181.8px;top:753.8px;height:40px;line-height:40px;font-size:23.333px;color:#d4d4d4;white-space:pre;">Outline</div><svg style="position:absolute;left:0;top:0;overflow:visible" width="1" height="1"><circle cx="2507" cy="771.5" r="5.5" fill="none" stroke="#adadad" stroke-width="1.7"/><path d="M2512.80 771.50L2517.10 771.50M2511.10 775.60L2514.14 778.64M2507.00 777.30L2507.00 781.60M2502.90 775.60L2499.86 778.64M2501.20 771.50L2496.90 771.50M2502.90 767.40L2499.86 764.36M2507.00 765.70L2507.00 761.40M2511.10 767.40L2514.14 764.36" stroke="#adadad" stroke-width="2.2" fill="none"/></svg><svg style="position:absolute;left:0;top:0;overflow:visible" width="1" height="1"><path d="M2535.5 765.0L2548.5 778.0M2548.5 765.0L2535.5 778.0" stroke="#adadad" stroke-width="2" fill="none"/></svg><div style="position:absolute;left:2151.0px;top:810.8px;height:40px;line-height:40px;font-size:23.333px;color:#858585;white-space:pre;font-style:italic;">Filter</div><div style="position:absolute;left:2146px;top:847px;width:402px;height:1px;background:#4a4a4a;"></div><div style="position:absolute;left:2134px;top:1090px;width:426px;height:46px;background:#282828;"></div><div style="position:absolute;left:2184.5px;top:878.1999999999999px;width:11.0px;height:11.0px;border-radius:50%;background:#6a9cf4"></div><div style="position:absolute;left:2212.5px;top:866.1px;height:40px;line-height:40px;font-size:23.333px;color:#d4d4d4;white-space:pre;width:347px;overflow:hidden;">ping</div><div style="position:absolute;left:2184.5px;top:924.1999999999999px;width:11.0px;height:11.0px;border-radius:50%;background:#6a9cf4"></div><div style="position:absolute;left:2212.5px;top:912.1px;height:40px;line-height:40px;font-size:23.333px;color:#d4d4d4;white-space:pre;width:347px;overflow:hidden;">ll ./images</div><div style="position:absolute;left:2184.5px;top:970.1999999999999px;width:11.0px;height:11.0px;border-radius:50%;background:#6a9cf4"></div><div style="position:absolute;left:2212.5px;top:958.1px;height:40px;line-height:40px;font-size:23.333px;color:#d4d4d4;white-space:pre;width:347px;overflow:hidden;">./true_color.sh</div><div style="position:absolute;left:2184.5px;top:1016.1999999999999px;width:11.0px;height:11.0px;border-radius:50%;background:#6a9cf4"></div><div style="position:absolute;left:2212.5px;top:1004.1px;height:40px;line-height:40px;font-size:23.333px;color:#d4d4d4;white-space:pre;width:347px;overflow:hidden;">for i in {128512..128589}; do</div><div style="position:absolute;left:2184.5px;top:1062.2px;width:11.0px;height:11.0px;border-radius:50%;background:#6a9cf4"></div><div style="position:absolute;left:2212.5px;top:1050.1px;height:40px;line-height:40px;font-size:23.333px;color:#d4d4d4;white-space:pre;width:347px;overflow:hidden;">cd git-test/</div><div style="position:absolute;left:2184.5px;top:1108.2px;width:11.0px;height:11.0px;border-radius:50%;background:#6a9cf4"></div><div style="position:absolute;left:2212.5px;top:1096.1px;height:40px;line-height:40px;font-size:23.333px;color:#d4d4d4;white-space:pre;width:347px;overflow:hidden;">...</div><div style="position:absolute;left:2133px;top:1171px;width:134px;height:16px;background:#484848;"></div><div style="position:absolute;left:0px;top:1188px;width:156px;height:47px;background:#2d2d2d;"></div><div style="position:absolute;left:22px;top:1205.5px;width:11.5px;height:11.5px;background:#a26be0;"></div><div style="position:absolute;left:47.3px;top:1194.8px;height:40px;line-height:40px;font-size:23.333px;color:#d4d4d4;white-space:pre;">Sender</div><div style="position:absolute;left:178px;top:1205.5px;width:11.5px;height:11.5px;background:#1fd0c8;"></div><div style="position:absolute;left:203.5px;top:1194.8px;height:40px;line-height:40px;font-size:23.333px;color:#d4d4d4;white-space:pre;">Transfer</div><svg style="position:absolute;left:0;top:0;overflow:visible" width="1" height="1"><circle cx="2507" cy="1212" r="5.5" fill="none" stroke="#adadad" stroke-width="1.7"/><path d="M2512.80 1212.00L2517.10 1212.00M2511.10 1216.10L2514.14 1219.14M2507.00 1217.80L2507.00 1222.10M2502.90 1216.10L2499.86 1219.14M2501.20 1212.00L2496.90 1212.00M2502.90 1207.90L2499.86 1204.86M2507.00 1206.20L2507.00 1201.90M2511.10 1207.90L2514.14 1204.86" stroke="#adadad" stroke-width="2.2" fill="none"/></svg><svg style="position:absolute;left:0;top:0;overflow:visible" width="1" height="1"><path d="M2535.5 1205.5L2548.5 1218.5M2548.5 1205.5L2535.5 1218.5" stroke="#adadad" stroke-width="2" fill="none"/></svg><svg style="position:absolute;left:35px;top:1278px;" width="22" height="29" viewBox="0 0 22 29"><path d="M0.5 0.5H14.5L20.5 6.5V28H0.5Z" fill="#f6f6f6"/><path d="M14.5 0.5V6.5H20.5Z" fill="#cfcfcf"/></svg><div style="position:absolute;left:81.0px;top:1256.3px;height:40px;line-height:40px;font-size:23.333px;color:#d4d4d4;white-space:pre;">benchmark_randomdata - 97.7 MB downloaded</div><div style="position:absolute;left:1687.6px;top:1256.3px;height:40px;line-height:40px;font-size:23.333px;color:#d4d4d4;white-space:pre;">C:/Users/Apple/Downloads DOWNLOAD [2020-11-13 18:47:45]</div><div style="position:absolute;left:74.5px;top:1304.5px;width:2391px;height:25px;background:linear-gradient(#0c90ff,#0a80ea);border-top:1px solid #48a8ff;border-bottom:1px solid #0a5cb0;"></div><div style="position:absolute;left:1242.0px;top:1307.8px;height:24px;line-height:24px;font-size:23.333px;color:#b4d2f2;white-space:pre;">100%</div><svg style="position:absolute;left:2516px;top:1287px;" width="16" height="9" viewBox="0 0 16 9"><path d="M0.5 0.5H15.5L8 8.5Z" fill="#9a9a9a"/></svg><svg style="position:absolute;left:32px;top:1432.7px;" width="30" height="31" viewBox="0 0 30 31"><rect x="0" y="0" width="29.2" height="30.4" fill="#b2b2b2"/><path d="M0 0.4L24.4 4.4V26L0 30Z" fill="#1a1a1a"/><path d="M4 5L20.8 7.3V23.3L4 25.2Z" fill="#b2b2b2"/></svg><div style="position:absolute;left:106.0px;top:1430.8px;height:40px;line-height:40px;font-size:23.333px;color:#d4d4d4;white-space:pre;">File</div><div style="position:absolute;left:182.2px;top:1430px;width:100.6px;height:35px;background:#232323;border:1px solid #3a3a3a;border-radius:3px"></div><svg style="position:absolute;left:0;top:0;overflow:visible" width="1" height="1"><rect x="191.8" y="1439.0" width="16.4" height="16.4" fill="#1e90ff"/></svg><div style="position:absolute;left:217.4px;top:1430.8px;height:40px;line-height:40px;font-size:23.333px;color:#d4d4d4;white-space:pre;">Copy</div><div style="position:absolute;left:291.3px;top:1430px;width:100.6px;height:35px;background:#232323;border:1px solid #3a3a3a;border-radius:3px"></div><svg style="position:absolute;left:0;top:0;overflow:visible" width="1" height="1"><circle cx="309.1" cy="1447.2" r="9.2" fill="#1e90ff"/></svg><div style="position:absolute;left:326.5px;top:1430.8px;height:40px;line-height:40px;font-size:23.333px;color:#d4d4d4;white-space:pre;">Move</div><div style="position:absolute;left:400px;top:1430px;width:128.6px;height:35px;background:#232323;border:1px solid #3a3a3a;border-radius:3px"></div><svg style="position:absolute;left:0;top:0;overflow:visible" width="1" height="1"><path transform="translate(417.8 1447.2) rotate(0)" d="M0 0C-1 -4 -4.5 -6 -3 -10C0.5 -10.5 3 -7 1.6 -0.2Z" fill="#1e90ff"/><path transform="translate(417.8 1447.2) rotate(90)" d="M0 0C-1 -4 -4.5 -6 -3 -10C0.5 -10.5 3 -7 1.6 -0.2Z" fill="#1e90ff"/><path transform="translate(417.8 1447.2) rotate(180)" d="M0 0C-1 -4 -4.5 -6 -3 -10C0.5 -10.5 3 -7 1.6 -0.2Z" fill="#1e90ff"/><path transform="translate(417.8 1447.2) rotate(270)" d="M0 0C-1 -4 -4.5 -6 -3 -10C0.5 -10.5 3 -7 1.6 -0.2Z" fill="#1e90ff"/></svg><div style="position:absolute;left:435.2px;top:1430.8px;height:40px;line-height:40px;font-size:23.333px;color:#d4d4d4;white-space:pre;">Remove</div><div style="position:absolute;left:537.3px;top:1430px;width:128.6px;height:35px;background:#232323;border:1px solid #3a3a3a;border-radius:3px"></div><svg style="position:absolute;left:0;top:0;overflow:visible" width="1" height="1"><path d="M555.0999999999999 1457.2C553.0999999999999 1451.2 549.0999999999999 1446.2 549.0999999999999 1443.0A6 6 0 0 1 561.0999999999999 1443.0C561.0999999999999 1446.2 557.0999999999999 1451.2 555.0999999999999 1457.2Z" fill="#1e90ff"/></svg><div style="position:absolute;left:572.5px;top:1430.8px;height:40px;line-height:40px;font-size:23.333px;color:#d4d4d4;white-space:pre;">Rename</div><div style="position:absolute;left:674.2px;top:1430px;width:156.6px;height:35px;background:#232323;border:1px solid #3a3a3a;border-radius:3px"></div><svg style="position:absolute;left:0;top:0;overflow:visible" width="1" height="1"><path d="M701.5 1437.7L694.0 1456.7L691.5 1447.7L682.5 1445.2Z" fill="#1e90ff"/></svg><div style="position:absolute;left:709.4px;top:1430.8px;height:40px;line-height:40px;font-size:23.333px;color:#d4d4d4;white-space:pre;">Property</div><div style="position:absolute;left:844.0px;top:1430.8px;height:40px;line-height:40px;font-size:23.333px;color:#d4d4d4;white-space:pre;">Network</div><div style="position:absolute;left:963px;top:1430px;width:100.6px;height:35px;background:#232323;border:1px solid #3a3a3a;border-radius:3px"></div><svg style="position:absolute;left:0;top:0;overflow:visible" width="1" height="1"><rect x="972.5999999999999" y="1439.0" width="16.4" height="16.4" fill="#ff1a9c"/></svg><div style="position:absolute;left:998.2px;top:1430.8px;height:40px;line-height:40px;font-size:23.333px;color:#d4d4d4;white-space:pre;">ping</div><div style="position:absolute;left:1072px;top:1430px;width:184.6px;height:35px;background:#232323;border:1px solid #3a3a3a;border-radius:3px"></div><svg style="position:absolute;left:0;top:0;overflow:visible" width="1" height="1"><circle cx="1089.8" cy="1447.2" r="9.2" fill="#ff1a9c"/></svg><div style="position:absolute;left:1107.2px;top:1430.8px;height:40px;line-height:40px;font-size:23.333px;color:#d4d4d4;white-space:pre;">traceroute</div><div style="position:absolute;left:1265px;top:1430px;width:86.6px;height:35px;background:#232323;border:1px solid #3a3a3a;border-radius:3px"></div><svg style="position:absolute;left:0;top:0;overflow:visible" width="1" height="1"><path transform="translate(1282.8 1447.2) rotate(0)" d="M0 0C-1 -4 -4.5 -6 -3 -10C0.5 -10.5 3 -7 1.6 -0.2Z" fill="#ff1a9c"/><path transform="translate(1282.8 1447.2) rotate(90)" d="M0 0C-1 -4 -4.5 -6 -3 -10C0.5 -10.5 3 -7 1.6 -0.2Z" fill="#ff1a9c"/><path transform="translate(1282.8 1447.2) rotate(180)" d="M0 0C-1 -4 -4.5 -6 -3 -10C0.5 -10.5 3 -7 1.6 -0.2Z" fill="#ff1a9c"/><path transform="translate(1282.8 1447.2) rotate(270)" d="M0 0C-1 -4 -4.5 -6 -3 -10C0.5 -10.5 3 -7 1.6 -0.2Z" fill="#ff1a9c"/></svg><div style="position:absolute;left:1300.2px;top:1430.8px;height:40px;line-height:40px;font-size:23.333px;color:#d4d4d4;white-space:pre;">mtr</div><div style="position:absolute;left:1360px;top:1430px;width:156.6px;height:35px;background:#232323;border:1px solid #3a3a3a;border-radius:3px"></div><svg style="position:absolute;left:0;top:0;overflow:visible" width="1" height="1"><polygon points="1377.8,1438.0 1380.3,1444.6 1387.3,1444.9 1381.8,1449.3 1383.7,1456.1 1377.8,1452.2 1371.9,1456.1 1373.8,1449.3 1368.3,1444.9 1375.3,1444.6" fill="#ff1a9c"/></svg><div style="position:absolute;left:1395.2px;top:1430.8px;height:40px;line-height:40px;font-size:23.333px;color:#d4d4d4;white-space:pre;">ifconfig</div><div style="position:absolute;left:1525px;top:1430px;width:142.6px;height:35px;background:#232323;border:1px solid #3a3a3a;border-radius:3px"></div><svg style="position:absolute;left:0;top:0;overflow:visible" width="1" height="1"><path d="M1537.3 1456.7V1442.2A5.5 5.5 0 0 1 1548.3 1442.2V1456.7L1542.8 1451.7Z" fill="#ff1a9c"/></svg><div style="position:absolute;left:1560.2px;top:1430.8px;height:40px;line-height:40px;font-size:23.333px;color:#d4d4d4;white-space:pre;">tcpdump</div><div style="position:absolute;left:1681.3px;top:1430.8px;height:40px;line-height:40px;font-size:23.333px;color:#d4d4d4;white-space:pre;">Shell</div><div style="position:absolute;left:1772.3px;top:1430px;width:72.6px;height:35px;background:#232323;border:1px solid #3a3a3a;border-radius:3px"></div><svg style="position:absolute;left:0;top:0;overflow:visible" width="1" height="1"><circle cx="1790.1" cy="1447.2" r="9.2" fill="#ffd21e"/></svg><div style="position:absolute;left:1807.5px;top:1430.8px;height:40px;line-height:40px;font-size:23.333px;color:#d4d4d4;white-space:pre;">ls</div><div style="position:absolute;left:1853.3px;top:1430px;width:86.6px;height:35px;background:#232323;border:1px solid #3a3a3a;border-radius:3px"></div><svg style="position:absolute;left:0;top:0;overflow:visible" width="1" height="1"><path d="M1880.6 1437.7L1873.1 1456.7L1870.6 1447.7L1861.6 1445.2Z" fill="#ffd21e"/></svg><div style="position:absolute;left:1888.5px;top:1430.8px;height:40px;line-height:40px;font-size:23.333px;color:#d4d4d4;white-space:pre;">cat</div><div style="position:absolute;left:1948px;top:1430px;width:72.6px;height:35px;background:#232323;border:1px solid #3a3a3a;border-radius:3px"></div><svg style="position:absolute;left:0;top:0;overflow:visible" width="1" height="1"><polygon points="1965.8,1438.0 1968.3,1444.6 1975.3,1444.9 1969.8,1449.3 1971.7,1456.1 1965.8,1452.2 1959.9,1456.1 1961.8,1449.3 1956.3,1444.9 1963.3,1444.6" fill="#ffd21e"/></svg><div style="position:absolute;left:1983.2px;top:1430.8px;height:40px;line-height:40px;font-size:23.333px;color:#d4d4d4;white-space:pre;">vi</div><div style="position:absolute;left:2034.5px;top:1430.8px;height:40px;line-height:40px;font-size:23.333px;color:#d4d4d4;white-space:pre;">System</div><div style="position:absolute;left:2139px;top:1430px;width:128.6px;height:35px;background:#232323;border:1px solid #3a3a3a;border-radius:3px"></div><svg style="position:absolute;left:0;top:0;overflow:visible" width="1" height="1"><rect x="2148.6000000000004" y="1439.0" width="16.4" height="16.4" fill="#2a9a2a"/></svg><div style="position:absolute;left:2174.2px;top:1430.8px;height:40px;line-height:40px;font-size:23.333px;color:#d4d4d4;white-space:pre;">reboot</div><div style="position:absolute;left:2276.3px;top:1430px;width:142.6px;height:35px;background:#232323;border:1px solid #3a3a3a;border-radius:3px"></div><svg style="position:absolute;left:0;top:0;overflow:visible" width="1" height="1"><path d="M2294.1000000000004 1456.7C2290.1000000000004 1452.2 2284.6000000000004 1447.7 2284.6000000000004 1443.2A4.9 4.9 0 0 1 2294.1000000000004 1441.7A4.9 4.9 0 0 1 2303.6000000000004 1443.2C2303.6000000000004 1447.7 2298.1000000000004 1452.2 2294.1000000000004 1456.7Z" fill="#2a9a2a"/></svg><div style="position:absolute;left:2311.5px;top:1430.8px;height:40px;line-height:40px;font-size:23.333px;color:#d4d4d4;white-space:pre;">crontab</div><svg style="position:absolute;left:0;top:0;overflow:visible" width="1" height="1"><circle cx="2506.5" cy="1447.5" r="5.5" fill="none" stroke="#adadad" stroke-width="1.7"/><path d="M2512.30 1447.50L2516.60 1447.50M2510.60 1451.60L2513.64 1454.64M2506.50 1453.30L2506.50 1457.60M2502.40 1451.60L2499.36 1454.64M2500.70 1447.50L2496.40 1447.50M2502.40 1443.40L2499.36 1440.36M2506.50 1441.70L2506.50 1437.40M2510.60 1443.40L2513.64 1440.36" stroke="#adadad" stroke-width="2.2" fill="none"/></svg><svg style="position:absolute;left:0;top:0;overflow:visible" width="1" height="1"><path d="M2535.5 1441.0L2548.5 1454.0M2548.5 1441.0L2535.5 1454.0" stroke="#adadad" stroke-width="2" fill="none"/></svg><div style="position:absolute;left:24.0px;top:1481.3px;height:40px;line-height:40px;font-size:23.333px;color:#d4d4d4;white-space:pre;">Ready</div><div style="position:absolute;left:1665.5px;top:1481.3px;height:40px;line-height:40px;font-size:23.333px;color:#d4d4d4;white-space:pre;font-weight:bold;letter-spacing:0.95px;">Remote Mode</div><div style="position:absolute;left:1830.5px;top:1482px;width:1.5px;height:34px;background:#e8e8e8;"></div><div style="position:absolute;left:1867.0px;top:1481.3px;height:40px;line-height:40px;font-size:23.333px;color:#d4d4d4;white-space:pre;">Ln 44 Ch 52</div><div style="position:absolute;left:2063.0px;top:1481.3px;height:40px;line-height:40px;font-size:23.333px;color:#d4d4d4;white-space:pre;">linux</div><div style="position:absolute;left:2169.5px;top:1481.3px;height:40px;line-height:40px;font-size:23.333px;color:#d4d4d4;white-space:pre;">2020/11/13 18:58</div><div style="position:absolute;left:2425.0px;top:1481.3px;height:40px;line-height:40px;font-size:23.333px;color:#1e80d2;white-space:pre;">WindTerm</div>
</body></html>
